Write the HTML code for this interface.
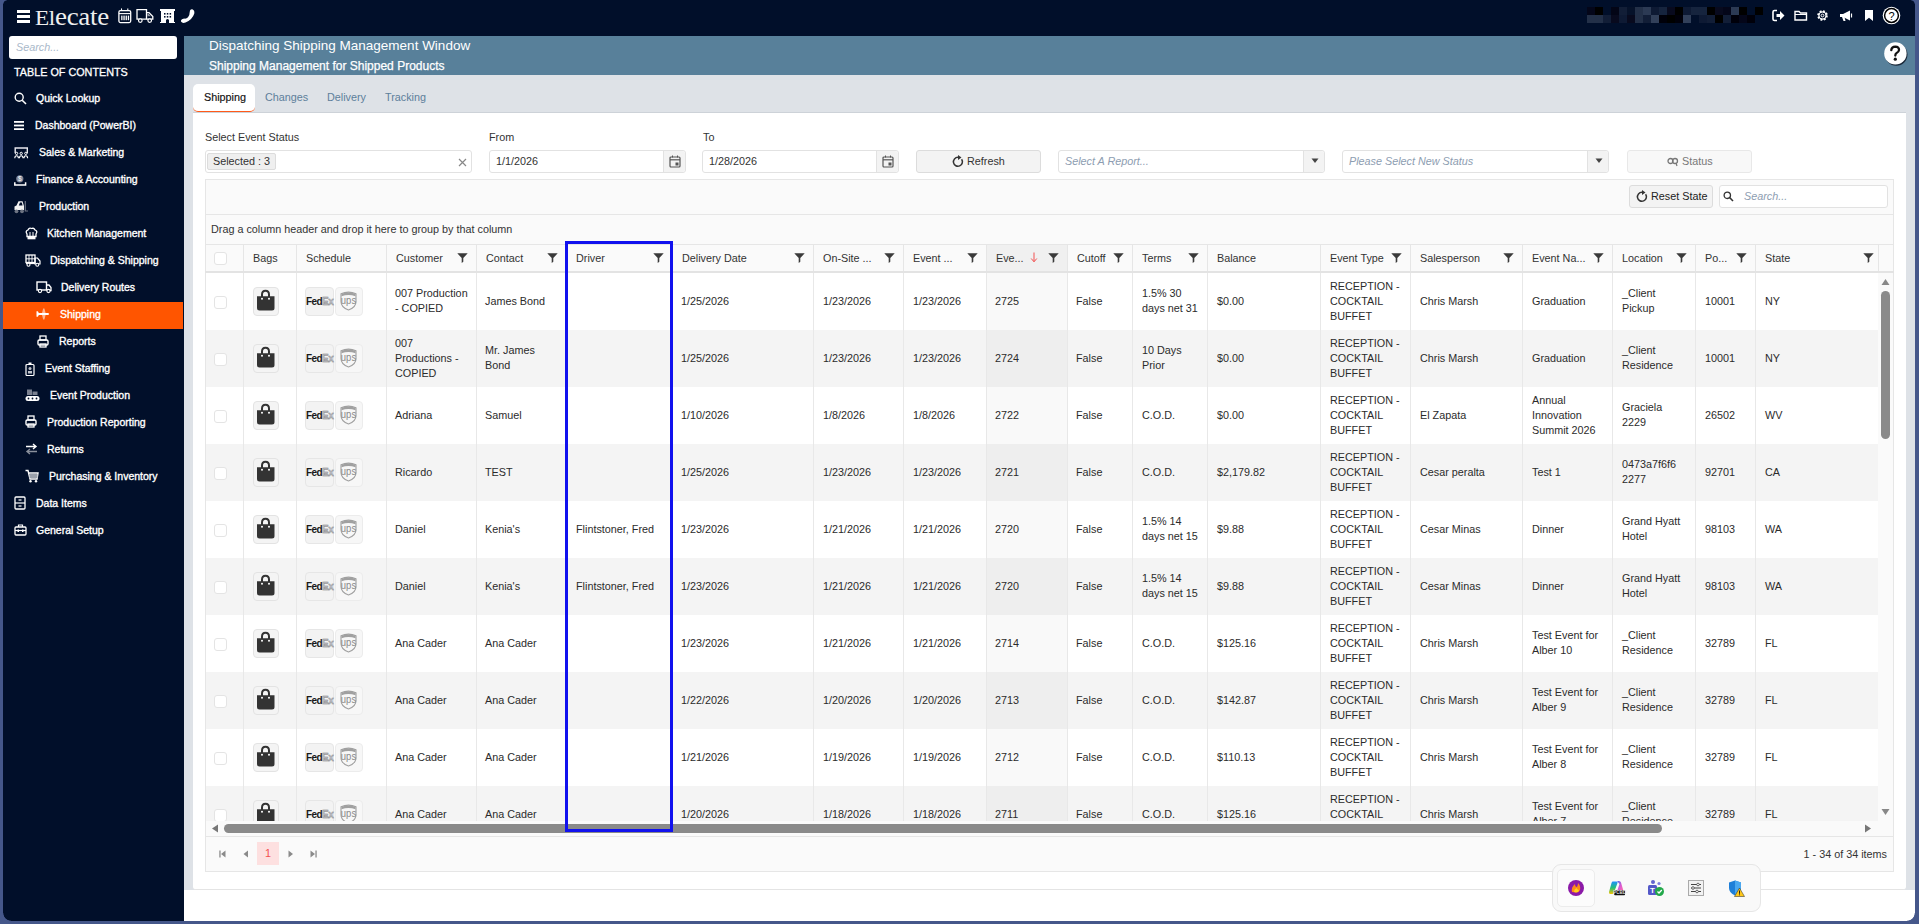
<!DOCTYPE html><html><head><meta charset="utf-8"><style>
*{box-sizing:border-box;margin:0;padding:0}
html,body{width:1919px;height:924px;overflow:hidden;background:#fff;font-family:"Liberation Sans",sans-serif;}
.a{position:absolute}
.t{position:absolute;white-space:nowrap;font-size:10.8px;line-height:12px}
.si{position:absolute;color:#fff;font-size:10.5px;white-space:nowrap;-webkit-text-stroke:0.35px #fff;line-height:12px}
.inp{position:absolute;height:23px;border:1px solid #e2e2e2;border-radius:3px;background:#fff;}
.btn{position:absolute;height:23px;border:1px solid #dcdcdc;border-radius:3px;background:#f3f3f3;}
.ph{color:#8d9db1;font-style:italic}
.cl{position:absolute;font-size:10.8px;color:#2b2b2b;line-height:15px;white-space:nowrap}
svg{position:absolute;overflow:visible}
</style></head><body><div class="a" style="left:0px;top:0px;width:1919px;height:36px;background:#010f2a"></div>
<div class="a" style="left:16.5px;top:10px;width:13.5px;height:3px;background:#fff"></div>
<div class="a" style="left:16.5px;top:15px;width:13.5px;height:3px;background:#fff"></div>
<div class="a" style="left:16.5px;top:19.5px;width:13.5px;height:3px;background:#fff"></div>
<div class="t" style="left:35px;top:3px;font-family:'Liberation Serif',serif;font-size:25px;line-height:28px;color:#eeeeee;letter-spacing:-0.3px;transform:scaleX(1.08);transform-origin:0 0"><span style="font-size:21.5px">El</span>ecate</div>
<svg style="left:118px;top:8px;" width="14" height="16" viewBox="0 0 14 16"><rect x="0.9" y="2.6" width="11.8" height="12" rx="1.5" fill="none" stroke="#fff" stroke-width="1.3"/><line x1="0.9" y1="5.6" x2="12.7" y2="5.6" stroke="#fff" stroke-width="1.1"/><line x1="3.5" y1="0.4" x2="3.5" y2="3" stroke="#fff" stroke-width="1.1"/><line x1="9.8" y1="0.4" x2="9.8" y2="3" stroke="#fff" stroke-width="1.1"/><rect x="3.2" y="7.6" width="1.3" height="4.6" fill="#fff"/><rect x="5.4" y="7.6" width="1.3" height="4.6" fill="#fff"/><rect x="7.6" y="7.6" width="1.3" height="4.6" fill="#fff"/><rect x="9.8" y="7.6" width="1.3" height="4.6" fill="#fff"/></svg>
<svg style="left:135px;top:8px;" width="20" height="16" viewBox="0 0 20 16"><path d="M2 1.6 H11.5 V11.2 H2 Z" fill="none" stroke="#fff" stroke-width="1.3"/><path d="M11.5 4.6 H14 L17.8 8.6 V11.2 H11.5" fill="none" stroke="#fff" stroke-width="1.3"/><path d="M12.5 5.8 H13.6 L15.8 8.2 H12.5 Z" fill="#fff" opacity="0.6"/><circle cx="5.3" cy="12.6" r="1.8" fill="#010f2a" stroke="#fff" stroke-width="1.2"/><circle cx="14.7" cy="12.6" r="1.8" fill="#010f2a" stroke="#fff" stroke-width="1.2"/></svg>
<svg style="left:159px;top:8px;" width="17" height="16" viewBox="0 0 17 16"><path d="M1 1 H16 V3 H15 V14 H16 V15 H10 V12 Q8.5 10 7 12 V15 H1 V14 H2 V3 H1 Z" fill="#fff"/><rect x="5" y="5" width="1.5" height="1.6" fill="#010f2a"/><rect x="7.8" y="5" width="1.5" height="1.6" fill="#010f2a"/><rect x="10.6" y="5" width="1.5" height="1.6" fill="#010f2a"/><rect x="5" y="8" width="1.5" height="1.6" fill="#010f2a"/><rect x="7.8" y="8" width="1.5" height="1.6" fill="#010f2a"/><rect x="10.6" y="8" width="1.5" height="1.6" fill="#010f2a"/></svg>
<svg style="left:180px;top:8px;" width="15" height="16" viewBox="0 0 15 16"><path d="M12.3 1.2 Q14.8 2.2 14.3 5.5 Q12.5 11.5 5.5 14.6 Q2.2 15.6 1 13.6 Q0.6 12 2 11.2 L4.2 10.6 Q6.5 11 8 9.2 Q9.8 7.3 9.6 4.8 L10 2.6 Q10.8 1 12.3 1.2 Z" fill="#fff"/></svg>
<div class="a" style="left:1587px;top:7px;width:8px;height:8px;background:rgb(4, 6, 25)"></div>
<div class="a" style="left:1587px;top:15px;width:8px;height:8px;background:rgb(35, 48, 72)"></div>
<div class="a" style="left:1595px;top:7px;width:8px;height:8px;background:rgb(0, 0, 0)"></div>
<div class="a" style="left:1595px;top:15px;width:8px;height:8px;background:rgb(35, 48, 72)"></div>
<div class="a" style="left:1603px;top:7px;width:8px;height:8px;background:rgb(1, 15, 42)"></div>
<div class="a" style="left:1603px;top:15px;width:8px;height:8px;background:rgb(18, 30, 55)"></div>
<div class="a" style="left:1611px;top:7px;width:8px;height:8px;background:rgb(3, 5, 22)"></div>
<div class="a" style="left:1611px;top:15px;width:8px;height:8px;background:rgb(8, 10, 30)"></div>
<div class="a" style="left:1619px;top:7px;width:8px;height:8px;background:rgb(18, 30, 55)"></div>
<div class="a" style="left:1619px;top:15px;width:8px;height:8px;background:rgb(14, 26, 52)"></div>
<div class="a" style="left:1627px;top:7px;width:8px;height:8px;background:rgb(6, 18, 42)"></div>
<div class="a" style="left:1627px;top:15px;width:8px;height:8px;background:rgb(8, 10, 30)"></div>
<div class="a" style="left:1635px;top:7px;width:8px;height:8px;background:rgb(35, 48, 72)"></div>
<div class="a" style="left:1635px;top:15px;width:8px;height:8px;background:rgb(35, 48, 72)"></div>
<div class="a" style="left:1643px;top:7px;width:8px;height:8px;background:rgb(44, 58, 84)"></div>
<div class="a" style="left:1643px;top:15px;width:8px;height:8px;background:rgb(18, 30, 55)"></div>
<div class="a" style="left:1651px;top:7px;width:8px;height:8px;background:rgb(14, 26, 52)"></div>
<div class="a" style="left:1651px;top:15px;width:8px;height:8px;background:rgb(50, 64, 90)"></div>
<div class="a" style="left:1659px;top:7px;width:8px;height:8px;background:rgb(22, 36, 62)"></div>
<div class="a" style="left:1659px;top:15px;width:8px;height:8px;background:rgb(0, 0, 10)"></div>
<div class="a" style="left:1667px;top:7px;width:8px;height:8px;background:rgb(8, 10, 30)"></div>
<div class="a" style="left:1667px;top:15px;width:8px;height:8px;background:rgb(0, 0, 0)"></div>
<div class="a" style="left:1675px;top:7px;width:8px;height:8px;background:rgb(0, 0, 0)"></div>
<div class="a" style="left:1675px;top:15px;width:8px;height:8px;background:rgb(0, 0, 10)"></div>
<div class="a" style="left:1683px;top:7px;width:8px;height:8px;background:rgb(14, 26, 52)"></div>
<div class="a" style="left:1683px;top:15px;width:8px;height:8px;background:rgb(50, 64, 90)"></div>
<div class="a" style="left:1691px;top:7px;width:8px;height:8px;background:rgb(22, 36, 62)"></div>
<div class="a" style="left:1691px;top:15px;width:8px;height:8px;background:rgb(1, 15, 42)"></div>
<div class="a" style="left:1699px;top:7px;width:8px;height:8px;background:rgb(22, 36, 62)"></div>
<div class="a" style="left:1699px;top:15px;width:8px;height:8px;background:rgb(14, 26, 52)"></div>
<div class="a" style="left:1707px;top:7px;width:8px;height:8px;background:rgb(0, 0, 0)"></div>
<div class="a" style="left:1707px;top:15px;width:8px;height:8px;background:rgb(18, 30, 55)"></div>
<div class="a" style="left:1715px;top:7px;width:8px;height:8px;background:rgb(8, 10, 30)"></div>
<div class="a" style="left:1715px;top:15px;width:8px;height:8px;background:rgb(0, 0, 0)"></div>
<div class="a" style="left:1723px;top:7px;width:8px;height:8px;background:rgb(4, 6, 25)"></div>
<div class="a" style="left:1723px;top:15px;width:8px;height:8px;background:rgb(18, 30, 55)"></div>
<div class="a" style="left:1731px;top:7px;width:8px;height:8px;background:rgb(44, 58, 84)"></div>
<div class="a" style="left:1731px;top:15px;width:8px;height:8px;background:rgb(0, 0, 10)"></div>
<div class="a" style="left:1739px;top:7px;width:8px;height:8px;background:rgb(0, 0, 0)"></div>
<div class="a" style="left:1739px;top:15px;width:8px;height:8px;background:rgb(4, 6, 25)"></div>
<div class="a" style="left:1747px;top:7px;width:8px;height:8px;background:rgb(1, 15, 42)"></div>
<div class="a" style="left:1747px;top:15px;width:8px;height:8px;background:rgb(0, 0, 10)"></div>
<div class="a" style="left:1755px;top:7px;width:8px;height:8px;background:rgb(0, 0, 0)"></div>
<div class="a" style="left:1755px;top:15px;width:8px;height:8px;background:rgb(1, 15, 42)"></div>
<svg style="left:1772px;top:9px;" width="13" height="13" viewBox="0 0 13 13"><path d="M5 1.5 H2.5 Q1 1.5 1 3 V10 Q1 11.5 2.5 11.5 H5" fill="none" stroke="#fff" stroke-width="1.6"/><path d="M4.5 5 H8 V2 L12.5 6.5 L8 11 V8 H4.5 Z" fill="#fff"/></svg>
<svg style="left:1794px;top:9px;" width="14" height="13" viewBox="0 0 14 13"><path d="M1 2.5 H5 L6.5 4 H12.5 V11 H1 Z" fill="none" stroke="#fff" stroke-width="1.4"/><line x1="1" y1="5.5" x2="12.5" y2="5.5" stroke="#fff" stroke-width="1"/></svg>
<svg style="left:1816px;top:9px;" width="13" height="13" viewBox="0 0 13 13"><circle cx="6.5" cy="6.5" r="4.2" fill="none" stroke="#fff" stroke-width="2.2" stroke-dasharray="1.8 1.5"/><circle cx="6.5" cy="6.5" r="3.6" fill="none" stroke="#fff" stroke-width="1.2"/><circle cx="6.5" cy="6.5" r="1.4" fill="none" stroke="#fff" stroke-width="1"/></svg>
<svg style="left:1839px;top:9px;" width="14" height="13" viewBox="0 0 14 13"><path d="M1 5 H4 L11 1.5 V11.5 L4 8 H1 Z" fill="#fff"/><path d="M3 8 L4.5 12 H6.5 L5.5 8" fill="#fff"/><line x1="12.5" y1="4.5" x2="12.5" y2="8.5" stroke="#fff" stroke-width="1.2"/></svg>
<svg style="left:1864px;top:9px;" width="10" height="13" viewBox="0 0 10 13"><path d="M1 1 H9 V12 L5 8.8 L1 12 Z" fill="#fff"/></svg>
<svg style="left:1882px;top:6px;" width="19" height="19" viewBox="0 0 19 19"><circle cx="9.5" cy="9.5" r="8.8" fill="#fff"/><circle cx="9.5" cy="9.5" r="6.9" fill="#fff" stroke="#000" stroke-width="1.5"/><text x="9.5" y="13.6" text-anchor="middle" font-family="Liberation Sans" font-size="11" fill="#000">?</text></svg>
<div class="a" style="left:0px;top:36px;width:184px;height:888px;background:#010f2a"></div>
<div class="a" style="left:9px;top:36px;width:168px;height:23px;background:#fff;border-radius:3px"></div>
<div class="t" style="left:16px;top:41px;color:#a9b8c9;font-style:italic;font-size:10.8px">Search...</div>
<div class="t" style="left:14px;top:66px;color:#fff;font-size:10.8px;-webkit-text-stroke:0.3px #fff">TABLE OF CONTENTS</div>
<div class="a" style="left:3px;top:302px;width:180px;height:27px;background:#ff5500"></div>
<div class="si" style="left:36px;top:92px">Quick Lookup</div>
<div class="si" style="left:35px;top:119px">Dashboard (PowerBI)</div>
<div class="si" style="left:39px;top:146px">Sales &amp; Marketing</div>
<div class="si" style="left:36px;top:173px">Finance &amp; Accounting</div>
<div class="si" style="left:39px;top:200px">Production</div>
<div class="si" style="left:47px;top:227px">Kitchen Management</div>
<div class="si" style="left:50px;top:254px">Dispatching &amp; Shipping</div>
<div class="si" style="left:61px;top:281px">Delivery Routes</div>
<div class="si" style="left:60px;top:308px">Shipping</div>
<div class="si" style="left:59px;top:335px">Reports</div>
<div class="si" style="left:45px;top:362px">Event Staffing</div>
<div class="si" style="left:50px;top:389px">Event Production</div>
<div class="si" style="left:47px;top:416px">Production Reporting</div>
<div class="si" style="left:47px;top:443px">Returns</div>
<div class="si" style="left:49px;top:470px">Purchasing &amp; Inventory</div>
<div class="si" style="left:36px;top:497px">Data Items</div>
<div class="si" style="left:36px;top:524px">General Setup</div>
<svg style="left:14px;top:92px;" width="13" height="13" viewBox="0 0 13 13"><circle cx="5.2" cy="5.2" r="4" fill="none" stroke="#fff" stroke-width="1.4"/><line x1="8.2" y1="8.2" x2="12" y2="12" stroke="#fff" stroke-width="1.6"/></svg>
<svg style="left:14px;top:120px;" width="11" height="11" viewBox="0 0 11 11"><rect x="0" y="1" width="10" height="1.8" fill="#fff"/><rect x="0" y="4.6" width="10" height="1.8" fill="#fff"/><rect x="0" y="8.2" width="10" height="1.8" fill="#fff"/></svg>
<svg style="left:14px;top:147px;" width="15" height="12" viewBox="0 0 15 12"><path d="M1.2 6.3 V1 H13.3 V6.3" fill="none" stroke="#e8e8ee" stroke-width="1.4"/><circle cx="2.6" cy="6.4" r="1.15" fill="none" stroke="#fff" stroke-width="1"/><circle cx="7.2" cy="6.4" r="1.15" fill="none" stroke="#fff" stroke-width="1"/><circle cx="11.8" cy="6.4" r="1.15" fill="none" stroke="#fff" stroke-width="1"/><path d="M0.8 11.3 Q0.8 8.8 2.6 8.8 Q4.4 8.8 4.4 11.3 M5.4 11.3 Q5.4 8.8 7.2 8.8 Q9 8.8 9 11.3 M10 11.3 Q10 8.8 11.8 8.8 Q13.6 8.8 13.6 11.3" fill="none" stroke="#fff" stroke-width="1.1"/></svg>
<svg style="left:14px;top:173px;" width="13" height="13" viewBox="0 0 13 13"><circle cx="5.8" cy="5.8" r="3.6" fill="#80889a"/><text x="5.8" y="8.3" text-anchor="middle" font-size="6.5" font-family="Liberation Sans" fill="#fff">$</text><path d="M0.8 9.2 V12 H11.6 V9.2" fill="none" stroke="#fff" stroke-width="1.5"/></svg>
<svg style="left:14px;top:200px;" width="15" height="14" viewBox="0 0 15 14"><path d="M0.5 10 V6.5 L2.5 5.5 L4.5 1.2 H8.5 L10 6 V10 Z" fill="#f2f2f2"/><path d="M4.8 5.6 L6 2.6 H7.8 L8.6 5.6 Z" fill="#010f2a"/><circle cx="2.5" cy="11.3" r="1.9" fill="#6c7382"/><circle cx="8" cy="11.3" r="1.9" fill="#6c7382"/><path d="M11.3 1 V11 H14" fill="none" stroke="#6c7382" stroke-width="1.2"/></svg>
<svg style="left:25px;top:227px;" width="13" height="13" viewBox="0 0 13 13"><path d="M2 7 Q0 4 3 3 Q4 0.5 6.5 1.5 Q9 0.5 10 3 Q13 4 11 7 V9.5 H2 Z" fill="none" stroke="#fff" stroke-width="1.3"/><rect x="2.5" y="10" width="8" height="2.3" fill="#fff"/><line x1="5" y1="5" x2="5" y2="9" stroke="#fff"/><line x1="8" y1="5" x2="8" y2="9" stroke="#fff"/></svg>
<svg style="left:25px;top:254px;" width="16" height="13" viewBox="0 0 16 13"><rect x="1" y="1" width="9" height="7.5" fill="none" stroke="#fff" stroke-width="1.3"/><line x1="1" y1="4.8" x2="10" y2="4.8" stroke="#fff" stroke-width="0.9"/><line x1="4" y1="1" x2="4" y2="8.5" stroke="#fff" stroke-width="0.9"/><line x1="7" y1="1" x2="7" y2="8.5" stroke="#fff" stroke-width="0.9"/><path d="M10 4 H12.5 L15 7 V10 H10 Z" fill="none" stroke="#fff" stroke-width="1.2"/><line x1="1" y1="9.5" x2="10" y2="9.5" stroke="#fff" stroke-width="1.2"/><circle cx="3.5" cy="10.8" r="1.5" fill="#010f2a" stroke="#fff" stroke-width="1.1"/><circle cx="12.3" cy="10.8" r="1.5" fill="#010f2a" stroke="#fff" stroke-width="1.1"/></svg>
<svg style="left:36px;top:281px;" width="16" height="12" viewBox="0 0 16 12"><rect x="1" y="1" width="9.5" height="8" fill="none" stroke="#fff" stroke-width="1.4"/><path d="M10.5 4 H13 L15 6.5 V9.5 H10.5" fill="none" stroke="#fff" stroke-width="1.3"/><circle cx="4" cy="10" r="1.6" fill="#010f2a" stroke="#fff" stroke-width="1.1"/><circle cx="12.5" cy="10" r="1.6" fill="#010f2a" stroke="#fff" stroke-width="1.1"/></svg>
<svg style="left:36px;top:307px;" width="14" height="14" viewBox="0 0 14 14"><path d="M6 6 L7.2 1.5 H8.4 L9.6 6 Z M6 8 L7.2 12.5 H8.4 L9.6 8 Z" fill="#ffb591"/><path d="M1.5 6 H12.3 Q14 7 12.3 8 H1.5 Z" fill="#fff"/><path d="M0.5 4.3 H1.8 L2.8 6 V8 L1.8 9.7 H0.5 Z" fill="#fff"/></svg>
<svg style="left:37px;top:335px;" width="12" height="13" viewBox="0 0 12 13"><rect x="3" y="1" width="6" height="4" fill="none" stroke="#fff" stroke-width="1.3"/><rect x="1" y="5" width="10" height="5" rx="1.2" fill="none" stroke="#fff" stroke-width="1.4"/><rect x="3" y="9" width="6" height="3" fill="none" stroke="#fff" stroke-width="1.3"/></svg>
<svg style="left:25px;top:362px;" width="10" height="14" viewBox="0 0 10 14"><rect x="1" y="2.5" width="8" height="11" rx="1" fill="none" stroke="#fff" stroke-width="1.2"/><rect x="3.5" y="0.5" width="3" height="2.5" fill="#fff"/><circle cx="5" cy="6.5" r="1.5" fill="#c0c4cc"/><rect x="3" y="9" width="4" height="2.5" fill="#c0c4cc"/></svg>
<svg style="left:25px;top:389px;" width="15" height="13" viewBox="0 0 15 13"><rect x="2" y="0.5" width="5" height="5.5" fill="#7b8190"/><rect x="7.5" y="2.5" width="5" height="3.5" fill="#7b8190"/><rect x="0.5" y="7" width="14" height="5" rx="2.5" fill="#fff"/><circle cx="3.5" cy="9.5" r="0.9" fill="#010f2a"/><circle cx="7.5" cy="9.5" r="0.9" fill="#010f2a"/><circle cx="11.5" cy="9.5" r="0.9" fill="#010f2a"/></svg>
<svg style="left:25px;top:415px;" width="12" height="13" viewBox="0 0 12 13"><rect x="3" y="1" width="6" height="4" fill="none" stroke="#fff" stroke-width="1.3"/><rect x="1" y="5" width="10" height="5" rx="1.2" fill="none" stroke="#fff" stroke-width="1.4"/><rect x="3" y="9" width="6" height="3" fill="none" stroke="#fff" stroke-width="1.3"/></svg>
<svg style="left:25px;top:443px;" width="13" height="12" viewBox="0 0 13 12"><path d="M1 3.5 H10.5 M8 1 L11 3.5 L8 6" fill="none" stroke="#fff" stroke-width="1.4"/><path d="M12 8.5 H2.5 M5 6 L2 8.5 L5 11" fill="none" stroke="#8a909c" stroke-width="1.4"/></svg>
<svg style="left:25px;top:469px;" width="14" height="14" viewBox="0 0 14 14"><path d="M0.5 1.5 H3 L5 10 H12 L13 4 H4" fill="none" stroke="#fff" stroke-width="1.4"/><circle cx="5.5" cy="12.3" r="1.2" fill="#fff"/><circle cx="11" cy="12.3" r="1.2" fill="#fff"/><rect x="4.5" y="5" width="8" height="4" fill="#9aa0ab"/></svg>
<svg style="left:14px;top:496px;" width="12" height="14" viewBox="0 0 12 14"><rect x="1" y="1" width="10" height="12" rx="1" fill="none" stroke="#fff" stroke-width="1.3"/><line x1="1" y1="7" x2="11" y2="7" stroke="#fff" stroke-width="1.2"/><line x1="4.5" y1="4" x2="7.5" y2="4" stroke="#fff" stroke-width="1.2"/><line x1="4.5" y1="10" x2="7.5" y2="10" stroke="#fff" stroke-width="1.2"/></svg>
<svg style="left:14px;top:523px;" width="13" height="13" viewBox="0 0 13 13"><path d="M4.5 4 V2 H8.5 V4" fill="none" stroke="#fff" stroke-width="1.2"/><rect x="1" y="4" width="11" height="8" rx="1" fill="none" stroke="#fff" stroke-width="1.3"/><line x1="1" y1="7.5" x2="12" y2="7.5" stroke="#fff" stroke-width="1.2"/><rect x="3.5" y="6.5" width="1.5" height="2.5" fill="#fff"/><rect x="8" y="6.5" width="1.5" height="2.5" fill="#fff"/></svg>
<div class="a" style="left:184px;top:36px;width:1735px;height:39px;background:#58809a"></div>
<div class="t" style="left:209px;top:38px;font-size:13.5px;line-height:16px;color:#fff">Dispatching Shipping Management Window</div>
<div class="t" style="left:209px;top:59px;font-size:12px;line-height:14px;color:#fff;-webkit-text-stroke:0.25px #fff">Shipping Management for Shipped Products</div>
<svg style="left:1884px;top:42px;" width="24" height="24" viewBox="0 0 24 24"><circle cx="12.3" cy="12.6" r="11.2" fill="#111a28" opacity="0.85"/><circle cx="11.4" cy="11.4" r="11.2" fill="#fff"/><path d="M7.3 8.2 Q7.6 4.6 11.3 4.6 Q15.2 4.8 15 8 Q14.8 10 12.6 11 Q11.3 11.7 11.3 13.5" fill="none" stroke="#111" stroke-width="2.3" stroke-linecap="round"/><circle cx="11.3" cy="17.2" r="1.6" fill="#111"/></svg>
<div class="a" style="left:184px;top:75px;width:1735px;height:815px;background:#dee2e7"></div>
<div class="a" style="left:193px;top:84px;width:62px;height:28px;background:#fff;border-radius:5px;border-bottom:1.6px solid #ff5a1a"></div>
<div class="t" style="left:204px;top:91px;color:#111;-webkit-text-stroke:0.15px #111">Shipping</div>
<div class="t" style="left:265px;top:91px;color:#5d7f9b">Changes</div>
<div class="t" style="left:327px;top:91px;color:#5d7f9b">Delivery</div>
<div class="t" style="left:385px;top:91px;color:#5d7f9b">Tracking</div>
<div class="a" style="left:193px;top:112px;width:1713px;height:778px;background:#fff;border-top:1px solid #cdd2d8;border-bottom:1px solid #e4e4e4;border-radius:0 0 3px 3px"></div>
<div class="t" style="left:205px;top:131px;color:#333">Select Event Status</div>
<div class="t" style="left:489px;top:131px;color:#333">From</div>
<div class="t" style="left:703px;top:131px;color:#333">To</div>
<div class="inp" style="left:205px;top:150px;width:267px"></div>
<div class="a" style="left:207px;top:153px;width:69px;height:17px;background:#efefef;border:1px solid #dcdcdc;border-radius:2px"></div>
<div class="t" style="left:213px;top:155px;color:#333">Selected : 3</div>
<svg style="left:458px;top:158px;" width="9" height="9" viewBox="0 0 9 9"><path d="M1 1 L8 8 M8 1 L1 8" stroke="#888" stroke-width="1.2"/></svg>
<div class="inp" style="left:489px;top:150px;width:197px"></div>
<div class="a" style="left:663px;top:151px;width:22px;height:21px;background:#f3f3f3;border-left:1px solid #e2e2e2;border-radius:0 3px 3px 0"></div>
<div class="t" style="left:496px;top:155px;color:#333">1/1/2026</div>
<svg style="left:669px;top:155px;" width="12" height="13" viewBox="0 0 12 13"><rect x="1" y="2" width="10" height="10" rx="1" fill="none" stroke="#555" stroke-width="1.2"/><line x1="1" y1="4.8" x2="11" y2="4.8" stroke="#555" stroke-width="1.2"/><line x1="3.5" y1="0.5" x2="3.5" y2="2.5" stroke="#555"/><line x1="8.5" y1="0.5" x2="8.5" y2="2.5" stroke="#555"/><rect x="6.5" y="7.5" width="3" height="3" fill="#555"/></svg>
<div class="inp" style="left:702px;top:150px;width:197px"></div>
<div class="a" style="left:876px;top:151px;width:22px;height:21px;background:#f3f3f3;border-left:1px solid #e2e2e2;border-radius:0 3px 3px 0"></div>
<div class="t" style="left:709px;top:155px;color:#333">1/28/2026</div>
<svg style="left:882px;top:155px;" width="12" height="13" viewBox="0 0 12 13"><rect x="1" y="2" width="10" height="10" rx="1" fill="none" stroke="#555" stroke-width="1.2"/><line x1="1" y1="4.8" x2="11" y2="4.8" stroke="#555" stroke-width="1.2"/><line x1="3.5" y1="0.5" x2="3.5" y2="2.5" stroke="#555"/><line x1="8.5" y1="0.5" x2="8.5" y2="2.5" stroke="#555"/><rect x="6.5" y="7.5" width="3" height="3" fill="#555"/></svg>
<div class="btn" style="left:916px;top:150px;width:125px"></div>
<svg style="left:952px;top:155px;" width="12" height="13" viewBox="0 0 12 13"><path d="M9.6 4.2 A4.5 4.5 0 1 1 6 2.3" fill="none" stroke="#333" stroke-width="1.5"/><path d="M6 0 L9.5 2.5 L6 5 Z" fill="#333"/></svg>
<div class="t" style="left:967px;top:155px;color:#333">Refresh</div>
<div class="inp" style="left:1058px;top:150px;width:267px"></div>
<div class="a" style="left:1303px;top:151px;width:21px;height:21px;background:#f3f3f3;border-left:1px solid #e2e2e2;border-radius:0 3px 3px 0"></div>
<svg style="left:1311px;top:158px;" width="8" height="6" viewBox="0 0 8 6"><path d="M0.5 0.5 H7.5 L4 5 Z" fill="#444"/></svg>
<div class="t" style="left:1065px;top:155px;color:#8d9db1;font-style:italic">Select A Report...</div>
<div class="inp" style="left:1342px;top:150px;width:267px"></div>
<div class="a" style="left:1587px;top:151px;width:21px;height:21px;background:#f3f3f3;border-left:1px solid #e2e2e2;border-radius:0 3px 3px 0"></div>
<svg style="left:1595px;top:158px;" width="8" height="6" viewBox="0 0 8 6"><path d="M0.5 0.5 H7.5 L4 5 Z" fill="#444"/></svg>
<div class="t" style="left:1349px;top:155px;color:#8d9db1;font-style:italic">Please Select New Status</div>
<div class="btn" style="left:1627px;top:150px;width:125px;background:#f8f8f8;border-color:#e8e8e8"></div>
<svg style="left:1667px;top:157px;" width="13" height="10" viewBox="0 0 13 10"><circle cx="3.5" cy="4" r="2.5" fill="none" stroke="#777" stroke-width="1.3"/><circle cx="8" cy="4" r="2.5" fill="none" stroke="#777" stroke-width="1.3"/><path d="M9 6 L10 9" stroke="#777" stroke-width="1.2"/></svg>
<div class="t" style="left:1682px;top:155px;color:#777">Status</div>
<div class="a" style="left:205px;top:179px;width:1689px;height:693px;background:#fafafa;border:1px solid #e6e6e6"></div>
<div class="a" style="left:205px;top:214px;width:1689px;height:1px;background:#e6e6e6"></div>
<div class="btn" style="left:1629px;top:185px;width:84px;height:23px;background:#f3f3f3"></div>
<svg style="left:1636px;top:190px;" width="12" height="13" viewBox="0 0 12 13"><path d="M9.6 4.2 A4.5 4.5 0 1 1 6 2.3" fill="none" stroke="#333" stroke-width="1.5"/><path d="M6 0 L9.5 2.5 L6 5 Z" fill="#333"/></svg>
<div class="t" style="left:1651px;top:190px;color:#222">Reset State</div>
<div class="inp" style="left:1719px;top:185px;width:169px;height:23px"></div>
<svg style="left:1723px;top:191px;" width="11" height="11" viewBox="0 0 11 11"><circle cx="4.3" cy="4.3" r="3.2" fill="none" stroke="#333" stroke-width="1.3"/><line x1="6.8" y1="6.8" x2="10" y2="10" stroke="#333" stroke-width="1.6"/></svg>
<div class="t" style="left:1744px;top:190px;color:#8d9db1;font-style:italic">Search...</div>
<div class="t" style="left:211px;top:223px;color:#333">Drag a column header and drop it here to group by that column</div>
<div class="a" style="left:205px;top:244px;width:1689px;height:1px;background:#e6e6e6"></div>
<div class="a" style="left:205px;top:271px;width:1689px;height:2px;background:#e3e3e3"></div>
<div class="a" style="left:987px;top:245px;width:80px;height:26px;background:#f0f0f0"></div>
<div class="a" style="left:243px;top:245px;width:1px;height:26px;background:#e6e6e6"></div>
<div class="a" style="left:296px;top:245px;width:1px;height:26px;background:#e6e6e6"></div>
<div class="t" style="left:253px;top:252px;color:#333">Bags</div>
<div class="a" style="left:386px;top:245px;width:1px;height:26px;background:#e6e6e6"></div>
<div class="t" style="left:306px;top:252px;color:#333">Schedule</div>
<div class="a" style="left:476px;top:245px;width:1px;height:26px;background:#e6e6e6"></div>
<div class="t" style="left:396px;top:252px;color:#333">Customer</div>
<svg style="left:457px;top:253px;" width="11" height="10" viewBox="0 0 11 10"><path d="M0.3 0.3 H10.7 L6.3 5 V8.8 L4.7 10 V5 Z" fill="#3a3a3a"/></svg>
<div class="a" style="left:566px;top:245px;width:1px;height:26px;background:#e6e6e6"></div>
<div class="t" style="left:486px;top:252px;color:#333">Contact</div>
<svg style="left:547px;top:253px;" width="11" height="10" viewBox="0 0 11 10"><path d="M0.3 0.3 H10.7 L6.3 5 V8.8 L4.7 10 V5 Z" fill="#3a3a3a"/></svg>
<div class="a" style="left:672px;top:245px;width:1px;height:26px;background:#e6e6e6"></div>
<div class="t" style="left:576px;top:252px;color:#333">Driver</div>
<svg style="left:653px;top:253px;" width="11" height="10" viewBox="0 0 11 10"><path d="M0.3 0.3 H10.7 L6.3 5 V8.8 L4.7 10 V5 Z" fill="#3a3a3a"/></svg>
<div class="a" style="left:813px;top:245px;width:1px;height:26px;background:#e6e6e6"></div>
<div class="t" style="left:682px;top:252px;color:#333">Delivery Date</div>
<svg style="left:794px;top:253px;" width="11" height="10" viewBox="0 0 11 10"><path d="M0.3 0.3 H10.7 L6.3 5 V8.8 L4.7 10 V5 Z" fill="#3a3a3a"/></svg>
<div class="a" style="left:903px;top:245px;width:1px;height:26px;background:#e6e6e6"></div>
<div class="t" style="left:823px;top:252px;color:#333">On-Site ...</div>
<svg style="left:884px;top:253px;" width="11" height="10" viewBox="0 0 11 10"><path d="M0.3 0.3 H10.7 L6.3 5 V8.8 L4.7 10 V5 Z" fill="#3a3a3a"/></svg>
<div class="a" style="left:986px;top:245px;width:1px;height:26px;background:#e6e6e6"></div>
<div class="t" style="left:913px;top:252px;color:#333">Event ...</div>
<svg style="left:967px;top:253px;" width="11" height="10" viewBox="0 0 11 10"><path d="M0.3 0.3 H10.7 L6.3 5 V8.8 L4.7 10 V5 Z" fill="#3a3a3a"/></svg>
<div class="a" style="left:1067px;top:245px;width:1px;height:26px;background:#e6e6e6"></div>
<div class="t" style="left:996px;top:252px;color:#333">Eve...</div>
<svg style="left:1048px;top:253px;" width="11" height="10" viewBox="0 0 11 10"><path d="M0.3 0.3 H10.7 L6.3 5 V8.8 L4.7 10 V5 Z" fill="#3a3a3a"/></svg>
<div class="a" style="left:1132px;top:245px;width:1px;height:26px;background:#e6e6e6"></div>
<div class="t" style="left:1077px;top:252px;color:#333">Cutoff</div>
<svg style="left:1113px;top:253px;" width="11" height="10" viewBox="0 0 11 10"><path d="M0.3 0.3 H10.7 L6.3 5 V8.8 L4.7 10 V5 Z" fill="#3a3a3a"/></svg>
<div class="a" style="left:1207px;top:245px;width:1px;height:26px;background:#e6e6e6"></div>
<div class="t" style="left:1142px;top:252px;color:#333">Terms</div>
<svg style="left:1188px;top:253px;" width="11" height="10" viewBox="0 0 11 10"><path d="M0.3 0.3 H10.7 L6.3 5 V8.8 L4.7 10 V5 Z" fill="#3a3a3a"/></svg>
<div class="a" style="left:1320px;top:245px;width:1px;height:26px;background:#e6e6e6"></div>
<div class="t" style="left:1217px;top:252px;color:#333">Balance</div>
<div class="a" style="left:1410px;top:245px;width:1px;height:26px;background:#e6e6e6"></div>
<div class="t" style="left:1330px;top:252px;color:#333">Event Type</div>
<svg style="left:1391px;top:253px;" width="11" height="10" viewBox="0 0 11 10"><path d="M0.3 0.3 H10.7 L6.3 5 V8.8 L4.7 10 V5 Z" fill="#3a3a3a"/></svg>
<div class="a" style="left:1522px;top:245px;width:1px;height:26px;background:#e6e6e6"></div>
<div class="t" style="left:1420px;top:252px;color:#333">Salesperson</div>
<svg style="left:1503px;top:253px;" width="11" height="10" viewBox="0 0 11 10"><path d="M0.3 0.3 H10.7 L6.3 5 V8.8 L4.7 10 V5 Z" fill="#3a3a3a"/></svg>
<div class="a" style="left:1612px;top:245px;width:1px;height:26px;background:#e6e6e6"></div>
<div class="t" style="left:1532px;top:252px;color:#333">Event Na...</div>
<svg style="left:1593px;top:253px;" width="11" height="10" viewBox="0 0 11 10"><path d="M0.3 0.3 H10.7 L6.3 5 V8.8 L4.7 10 V5 Z" fill="#3a3a3a"/></svg>
<div class="a" style="left:1695px;top:245px;width:1px;height:26px;background:#e6e6e6"></div>
<div class="t" style="left:1622px;top:252px;color:#333">Location</div>
<svg style="left:1676px;top:253px;" width="11" height="10" viewBox="0 0 11 10"><path d="M0.3 0.3 H10.7 L6.3 5 V8.8 L4.7 10 V5 Z" fill="#3a3a3a"/></svg>
<div class="a" style="left:1755px;top:245px;width:1px;height:26px;background:#e6e6e6"></div>
<div class="t" style="left:1705px;top:252px;color:#333">Po...</div>
<svg style="left:1736px;top:253px;" width="11" height="10" viewBox="0 0 11 10"><path d="M0.3 0.3 H10.7 L6.3 5 V8.8 L4.7 10 V5 Z" fill="#3a3a3a"/></svg>
<div class="a" style="left:1878px;top:245px;width:1px;height:26px;background:#e6e6e6"></div>
<div class="t" style="left:1765px;top:252px;color:#333">State</div>
<svg style="left:1862.5px;top:253px;" width="11" height="10" viewBox="0 0 11 10"><path d="M0.3 0.3 H10.7 L6.3 5 V8.8 L4.7 10 V5 Z" fill="#3a3a3a"/></svg>
<svg style="left:1030px;top:252px;" width="8" height="11" viewBox="0 0 8 11"><path d="M4 0.5 V9.5" stroke="#f25050" stroke-width="1"/><path d="M1.2 6.5 L4 9.8 L6.8 6.5" fill="none" stroke="#f25050" stroke-width="1"/></svg>
<div class="a" style="left:214px;top:252px;width:13px;height:13px;background:#fff;border:1px solid #e4e4e4;border-radius:3px"></div>
<div class="a" style="left:206px;top:273px;width:1672px;height:548px;overflow:hidden;background:#fff">
<div class="a" style="left:0px;top:0px;width:1672px;height:57px;background:#fff"></div>
<div class="a" style="left:781px;top:0px;width:80px;height:57px;background:rgba(0,0,0,0.025)"></div>
<div class="a" style="left:8px;top:22.5px;width:13px;height:13px;background:#fff;border:1px solid #e4e4e4;border-radius:3px"></div>
<div class="a" style="left:47px;top:14px;width:26px;height:29px;background:#f4f4f4;border:1px solid #e3e3e3;border-radius:4px"></div>
<svg style="left:50px;top:16px;" width="20" height="22" viewBox="0 0 20 22"><path d="M6 8 V5.5 Q6 1.8 9.5 1.8 Q13 1.8 13 5.5 V8" fill="none" stroke="#333" stroke-width="2"/><path d="M1 7.2 H18.5 V19 Q18.5 21.5 16 21.5 H3.5 Q1 21.5 1 19 Z" fill="#333"/><circle cx="6" cy="9.8" r="1" fill="#fff"/><circle cx="13" cy="9.8" r="1" fill="#fff"/></svg>
<div class="a" style="left:99px;top:14px;width:29px;height:29px;background:#f3f3f3;border:1px solid #e6e6e6;border-radius:4px"></div>
<div class="t" style="left:100px;top:23px;font-size:10px;font-weight:bold;letter-spacing:-0.6px;color:#1a1a1a">Fed<span style="color:#c4c4cc;letter-spacing:-0.4px;-webkit-text-stroke:0.35px #777">Ex</span></div>
<div class="a" style="left:129px;top:14px;width:28px;height:29px;background:#f7f7f7;border:1px solid #ececec;border-radius:4px"></div>
<svg style="left:134px;top:18px;" width="17" height="20" viewBox="0 0 17 20"><path d="M1 2.8 Q8.5 -0.6 16 2.8 V10.5 Q16 16.5 8.5 19 Q1 16.5 1 10.5 Z" fill="none" stroke="#a0a0a0" stroke-width="1.1"/><path d="M1.5 3 Q8.5 0.2 15.5 3 V5.2 Q8.5 3 1.5 5.2 Z" fill="#a0a0a0"/><text x="8.5" y="13.2" text-anchor="middle" font-family="Liberation Sans" font-size="9.5" fill="#8a8a8a" transform="scale(1,1.15) translate(0,-1.7)">ups</text></svg>
<div class="cl" style="left:189px;top:13.0px">007 Production<br>- COPIED</div>
<div class="cl" style="left:279px;top:21.0px">James Bond</div>
<div class="cl" style="left:475px;top:21.0px">1/25/2026</div>
<div class="cl" style="left:617px;top:21.0px">1/23/2026</div>
<div class="cl" style="left:707px;top:21.0px">1/23/2026</div>
<div class="cl" style="left:789px;top:21.0px">2725</div>
<div class="cl" style="left:870px;top:21.0px">False</div>
<div class="cl" style="left:936px;top:13.0px">1.5% 30<br>days net 31</div>
<div class="cl" style="left:1011px;top:21.0px">$0.00</div>
<div class="cl" style="left:1124px;top:6.0px">RECEPTION -<br>COCKTAIL<br>BUFFET</div>
<div class="cl" style="left:1214px;top:21.0px">Chris Marsh</div>
<div class="cl" style="left:1326px;top:21.0px">Graduation</div>
<div class="cl" style="left:1416px;top:13.0px">_Client<br>Pickup</div>
<div class="cl" style="left:1499px;top:21.0px">10001</div>
<div class="cl" style="left:1559px;top:21.0px">NY</div>
<div class="a" style="left:37px;top:0px;width:1px;height:57px;background:#e8e8e8"></div>
<div class="a" style="left:90px;top:0px;width:1px;height:57px;background:#e8e8e8"></div>
<div class="a" style="left:180px;top:0px;width:1px;height:57px;background:#e8e8e8"></div>
<div class="a" style="left:270px;top:0px;width:1px;height:57px;background:#e8e8e8"></div>
<div class="a" style="left:607px;top:0px;width:1px;height:57px;background:#e8e8e8"></div>
<div class="a" style="left:697px;top:0px;width:1px;height:57px;background:#e8e8e8"></div>
<div class="a" style="left:780px;top:0px;width:1px;height:57px;background:#e8e8e8"></div>
<div class="a" style="left:861px;top:0px;width:1px;height:57px;background:#e8e8e8"></div>
<div class="a" style="left:926px;top:0px;width:1px;height:57px;background:#e8e8e8"></div>
<div class="a" style="left:1001px;top:0px;width:1px;height:57px;background:#e8e8e8"></div>
<div class="a" style="left:1114px;top:0px;width:1px;height:57px;background:#e8e8e8"></div>
<div class="a" style="left:1204px;top:0px;width:1px;height:57px;background:#e8e8e8"></div>
<div class="a" style="left:1316px;top:0px;width:1px;height:57px;background:#e8e8e8"></div>
<div class="a" style="left:1406px;top:0px;width:1px;height:57px;background:#e8e8e8"></div>
<div class="a" style="left:1489px;top:0px;width:1px;height:57px;background:#e8e8e8"></div>
<div class="a" style="left:1549px;top:0px;width:1px;height:57px;background:#e8e8e8"></div>
<div class="a" style="left:1672px;top:0px;width:1px;height:57px;background:#e8e8e8"></div>
<div class="a" style="left:0px;top:57px;width:1672px;height:57px;background:#f4f4f4"></div>
<div class="a" style="left:781px;top:57px;width:80px;height:57px;background:rgba(0,0,0,0.025)"></div>
<div class="a" style="left:8px;top:79.5px;width:13px;height:13px;background:#fff;border:1px solid #e4e4e4;border-radius:3px"></div>
<div class="a" style="left:47px;top:71px;width:26px;height:29px;background:#f4f4f4;border:1px solid #e3e3e3;border-radius:4px"></div>
<svg style="left:50px;top:73px;" width="20" height="22" viewBox="0 0 20 22"><path d="M6 8 V5.5 Q6 1.8 9.5 1.8 Q13 1.8 13 5.5 V8" fill="none" stroke="#333" stroke-width="2"/><path d="M1 7.2 H18.5 V19 Q18.5 21.5 16 21.5 H3.5 Q1 21.5 1 19 Z" fill="#333"/><circle cx="6" cy="9.8" r="1" fill="#fff"/><circle cx="13" cy="9.8" r="1" fill="#fff"/></svg>
<div class="a" style="left:99px;top:71px;width:29px;height:29px;background:#f3f3f3;border:1px solid #e6e6e6;border-radius:4px"></div>
<div class="t" style="left:100px;top:80px;font-size:10px;font-weight:bold;letter-spacing:-0.6px;color:#1a1a1a">Fed<span style="color:#c4c4cc;letter-spacing:-0.4px;-webkit-text-stroke:0.35px #777">Ex</span></div>
<div class="a" style="left:129px;top:71px;width:28px;height:29px;background:#f7f7f7;border:1px solid #ececec;border-radius:4px"></div>
<svg style="left:134px;top:75px;" width="17" height="20" viewBox="0 0 17 20"><path d="M1 2.8 Q8.5 -0.6 16 2.8 V10.5 Q16 16.5 8.5 19 Q1 16.5 1 10.5 Z" fill="none" stroke="#a0a0a0" stroke-width="1.1"/><path d="M1.5 3 Q8.5 0.2 15.5 3 V5.2 Q8.5 3 1.5 5.2 Z" fill="#a0a0a0"/><text x="8.5" y="13.2" text-anchor="middle" font-family="Liberation Sans" font-size="9.5" fill="#8a8a8a" transform="scale(1,1.15) translate(0,-1.7)">ups</text></svg>
<div class="cl" style="left:189px;top:63.0px">007<br>Productions -<br>COPIED</div>
<div class="cl" style="left:279px;top:70.0px">Mr. James<br>Bond</div>
<div class="cl" style="left:475px;top:78.0px">1/25/2026</div>
<div class="cl" style="left:617px;top:78.0px">1/23/2026</div>
<div class="cl" style="left:707px;top:78.0px">1/23/2026</div>
<div class="cl" style="left:789px;top:78.0px">2724</div>
<div class="cl" style="left:870px;top:78.0px">False</div>
<div class="cl" style="left:936px;top:70.0px">10 Days<br>Prior</div>
<div class="cl" style="left:1011px;top:78.0px">$0.00</div>
<div class="cl" style="left:1124px;top:63.0px">RECEPTION -<br>COCKTAIL<br>BUFFET</div>
<div class="cl" style="left:1214px;top:78.0px">Chris Marsh</div>
<div class="cl" style="left:1326px;top:78.0px">Graduation</div>
<div class="cl" style="left:1416px;top:70.0px">_Client<br>Residence</div>
<div class="cl" style="left:1499px;top:78.0px">10001</div>
<div class="cl" style="left:1559px;top:78.0px">NY</div>
<div class="a" style="left:37px;top:57px;width:1px;height:57px;background:#e8e8e8"></div>
<div class="a" style="left:90px;top:57px;width:1px;height:57px;background:#e8e8e8"></div>
<div class="a" style="left:180px;top:57px;width:1px;height:57px;background:#e8e8e8"></div>
<div class="a" style="left:270px;top:57px;width:1px;height:57px;background:#e8e8e8"></div>
<div class="a" style="left:607px;top:57px;width:1px;height:57px;background:#e8e8e8"></div>
<div class="a" style="left:697px;top:57px;width:1px;height:57px;background:#e8e8e8"></div>
<div class="a" style="left:780px;top:57px;width:1px;height:57px;background:#e8e8e8"></div>
<div class="a" style="left:861px;top:57px;width:1px;height:57px;background:#e8e8e8"></div>
<div class="a" style="left:926px;top:57px;width:1px;height:57px;background:#e8e8e8"></div>
<div class="a" style="left:1001px;top:57px;width:1px;height:57px;background:#e8e8e8"></div>
<div class="a" style="left:1114px;top:57px;width:1px;height:57px;background:#e8e8e8"></div>
<div class="a" style="left:1204px;top:57px;width:1px;height:57px;background:#e8e8e8"></div>
<div class="a" style="left:1316px;top:57px;width:1px;height:57px;background:#e8e8e8"></div>
<div class="a" style="left:1406px;top:57px;width:1px;height:57px;background:#e8e8e8"></div>
<div class="a" style="left:1489px;top:57px;width:1px;height:57px;background:#e8e8e8"></div>
<div class="a" style="left:1549px;top:57px;width:1px;height:57px;background:#e8e8e8"></div>
<div class="a" style="left:1672px;top:57px;width:1px;height:57px;background:#e8e8e8"></div>
<div class="a" style="left:0px;top:114px;width:1672px;height:57px;background:#fff"></div>
<div class="a" style="left:781px;top:114px;width:80px;height:57px;background:rgba(0,0,0,0.025)"></div>
<div class="a" style="left:8px;top:136.5px;width:13px;height:13px;background:#fff;border:1px solid #e4e4e4;border-radius:3px"></div>
<div class="a" style="left:47px;top:128px;width:26px;height:29px;background:#f4f4f4;border:1px solid #e3e3e3;border-radius:4px"></div>
<svg style="left:50px;top:130px;" width="20" height="22" viewBox="0 0 20 22"><path d="M6 8 V5.5 Q6 1.8 9.5 1.8 Q13 1.8 13 5.5 V8" fill="none" stroke="#333" stroke-width="2"/><path d="M1 7.2 H18.5 V19 Q18.5 21.5 16 21.5 H3.5 Q1 21.5 1 19 Z" fill="#333"/><circle cx="6" cy="9.8" r="1" fill="#fff"/><circle cx="13" cy="9.8" r="1" fill="#fff"/></svg>
<div class="a" style="left:99px;top:128px;width:29px;height:29px;background:#f3f3f3;border:1px solid #e6e6e6;border-radius:4px"></div>
<div class="t" style="left:100px;top:137px;font-size:10px;font-weight:bold;letter-spacing:-0.6px;color:#1a1a1a">Fed<span style="color:#c4c4cc;letter-spacing:-0.4px;-webkit-text-stroke:0.35px #777">Ex</span></div>
<div class="a" style="left:129px;top:128px;width:28px;height:29px;background:#f7f7f7;border:1px solid #ececec;border-radius:4px"></div>
<svg style="left:134px;top:132px;" width="17" height="20" viewBox="0 0 17 20"><path d="M1 2.8 Q8.5 -0.6 16 2.8 V10.5 Q16 16.5 8.5 19 Q1 16.5 1 10.5 Z" fill="none" stroke="#a0a0a0" stroke-width="1.1"/><path d="M1.5 3 Q8.5 0.2 15.5 3 V5.2 Q8.5 3 1.5 5.2 Z" fill="#a0a0a0"/><text x="8.5" y="13.2" text-anchor="middle" font-family="Liberation Sans" font-size="9.5" fill="#8a8a8a" transform="scale(1,1.15) translate(0,-1.7)">ups</text></svg>
<div class="cl" style="left:189px;top:135.0px">Adriana</div>
<div class="cl" style="left:279px;top:135.0px">Samuel</div>
<div class="cl" style="left:475px;top:135.0px">1/10/2026</div>
<div class="cl" style="left:617px;top:135.0px">1/8/2026</div>
<div class="cl" style="left:707px;top:135.0px">1/8/2026</div>
<div class="cl" style="left:789px;top:135.0px">2722</div>
<div class="cl" style="left:870px;top:135.0px">False</div>
<div class="cl" style="left:936px;top:135.0px">C.O.D.</div>
<div class="cl" style="left:1011px;top:135.0px">$0.00</div>
<div class="cl" style="left:1124px;top:120.0px">RECEPTION -<br>COCKTAIL<br>BUFFET</div>
<div class="cl" style="left:1214px;top:135.0px">El Zapata</div>
<div class="cl" style="left:1326px;top:120.0px">Annual<br>Innovation<br>Summit 2026</div>
<div class="cl" style="left:1416px;top:127.0px">Graciela<br>2229</div>
<div class="cl" style="left:1499px;top:135.0px">26502</div>
<div class="cl" style="left:1559px;top:135.0px">WV</div>
<div class="a" style="left:37px;top:114px;width:1px;height:57px;background:#e8e8e8"></div>
<div class="a" style="left:90px;top:114px;width:1px;height:57px;background:#e8e8e8"></div>
<div class="a" style="left:180px;top:114px;width:1px;height:57px;background:#e8e8e8"></div>
<div class="a" style="left:270px;top:114px;width:1px;height:57px;background:#e8e8e8"></div>
<div class="a" style="left:607px;top:114px;width:1px;height:57px;background:#e8e8e8"></div>
<div class="a" style="left:697px;top:114px;width:1px;height:57px;background:#e8e8e8"></div>
<div class="a" style="left:780px;top:114px;width:1px;height:57px;background:#e8e8e8"></div>
<div class="a" style="left:861px;top:114px;width:1px;height:57px;background:#e8e8e8"></div>
<div class="a" style="left:926px;top:114px;width:1px;height:57px;background:#e8e8e8"></div>
<div class="a" style="left:1001px;top:114px;width:1px;height:57px;background:#e8e8e8"></div>
<div class="a" style="left:1114px;top:114px;width:1px;height:57px;background:#e8e8e8"></div>
<div class="a" style="left:1204px;top:114px;width:1px;height:57px;background:#e8e8e8"></div>
<div class="a" style="left:1316px;top:114px;width:1px;height:57px;background:#e8e8e8"></div>
<div class="a" style="left:1406px;top:114px;width:1px;height:57px;background:#e8e8e8"></div>
<div class="a" style="left:1489px;top:114px;width:1px;height:57px;background:#e8e8e8"></div>
<div class="a" style="left:1549px;top:114px;width:1px;height:57px;background:#e8e8e8"></div>
<div class="a" style="left:1672px;top:114px;width:1px;height:57px;background:#e8e8e8"></div>
<div class="a" style="left:0px;top:171px;width:1672px;height:57px;background:#f4f4f4"></div>
<div class="a" style="left:781px;top:171px;width:80px;height:57px;background:rgba(0,0,0,0.025)"></div>
<div class="a" style="left:8px;top:193.5px;width:13px;height:13px;background:#fff;border:1px solid #e4e4e4;border-radius:3px"></div>
<div class="a" style="left:47px;top:185px;width:26px;height:29px;background:#f4f4f4;border:1px solid #e3e3e3;border-radius:4px"></div>
<svg style="left:50px;top:187px;" width="20" height="22" viewBox="0 0 20 22"><path d="M6 8 V5.5 Q6 1.8 9.5 1.8 Q13 1.8 13 5.5 V8" fill="none" stroke="#333" stroke-width="2"/><path d="M1 7.2 H18.5 V19 Q18.5 21.5 16 21.5 H3.5 Q1 21.5 1 19 Z" fill="#333"/><circle cx="6" cy="9.8" r="1" fill="#fff"/><circle cx="13" cy="9.8" r="1" fill="#fff"/></svg>
<div class="a" style="left:99px;top:185px;width:29px;height:29px;background:#f3f3f3;border:1px solid #e6e6e6;border-radius:4px"></div>
<div class="t" style="left:100px;top:194px;font-size:10px;font-weight:bold;letter-spacing:-0.6px;color:#1a1a1a">Fed<span style="color:#c4c4cc;letter-spacing:-0.4px;-webkit-text-stroke:0.35px #777">Ex</span></div>
<div class="a" style="left:129px;top:185px;width:28px;height:29px;background:#f7f7f7;border:1px solid #ececec;border-radius:4px"></div>
<svg style="left:134px;top:189px;" width="17" height="20" viewBox="0 0 17 20"><path d="M1 2.8 Q8.5 -0.6 16 2.8 V10.5 Q16 16.5 8.5 19 Q1 16.5 1 10.5 Z" fill="none" stroke="#a0a0a0" stroke-width="1.1"/><path d="M1.5 3 Q8.5 0.2 15.5 3 V5.2 Q8.5 3 1.5 5.2 Z" fill="#a0a0a0"/><text x="8.5" y="13.2" text-anchor="middle" font-family="Liberation Sans" font-size="9.5" fill="#8a8a8a" transform="scale(1,1.15) translate(0,-1.7)">ups</text></svg>
<div class="cl" style="left:189px;top:192.0px">Ricardo</div>
<div class="cl" style="left:279px;top:192.0px">TEST</div>
<div class="cl" style="left:475px;top:192.0px">1/25/2026</div>
<div class="cl" style="left:617px;top:192.0px">1/23/2026</div>
<div class="cl" style="left:707px;top:192.0px">1/23/2026</div>
<div class="cl" style="left:789px;top:192.0px">2721</div>
<div class="cl" style="left:870px;top:192.0px">False</div>
<div class="cl" style="left:936px;top:192.0px">C.O.D.</div>
<div class="cl" style="left:1011px;top:192.0px">$2,179.82</div>
<div class="cl" style="left:1124px;top:177.0px">RECEPTION -<br>COCKTAIL<br>BUFFET</div>
<div class="cl" style="left:1214px;top:192.0px">Cesar peralta</div>
<div class="cl" style="left:1326px;top:192.0px">Test 1</div>
<div class="cl" style="left:1416px;top:184.0px">0473a7f6f6<br>2277</div>
<div class="cl" style="left:1499px;top:192.0px">92701</div>
<div class="cl" style="left:1559px;top:192.0px">CA</div>
<div class="a" style="left:37px;top:171px;width:1px;height:57px;background:#e8e8e8"></div>
<div class="a" style="left:90px;top:171px;width:1px;height:57px;background:#e8e8e8"></div>
<div class="a" style="left:180px;top:171px;width:1px;height:57px;background:#e8e8e8"></div>
<div class="a" style="left:270px;top:171px;width:1px;height:57px;background:#e8e8e8"></div>
<div class="a" style="left:607px;top:171px;width:1px;height:57px;background:#e8e8e8"></div>
<div class="a" style="left:697px;top:171px;width:1px;height:57px;background:#e8e8e8"></div>
<div class="a" style="left:780px;top:171px;width:1px;height:57px;background:#e8e8e8"></div>
<div class="a" style="left:861px;top:171px;width:1px;height:57px;background:#e8e8e8"></div>
<div class="a" style="left:926px;top:171px;width:1px;height:57px;background:#e8e8e8"></div>
<div class="a" style="left:1001px;top:171px;width:1px;height:57px;background:#e8e8e8"></div>
<div class="a" style="left:1114px;top:171px;width:1px;height:57px;background:#e8e8e8"></div>
<div class="a" style="left:1204px;top:171px;width:1px;height:57px;background:#e8e8e8"></div>
<div class="a" style="left:1316px;top:171px;width:1px;height:57px;background:#e8e8e8"></div>
<div class="a" style="left:1406px;top:171px;width:1px;height:57px;background:#e8e8e8"></div>
<div class="a" style="left:1489px;top:171px;width:1px;height:57px;background:#e8e8e8"></div>
<div class="a" style="left:1549px;top:171px;width:1px;height:57px;background:#e8e8e8"></div>
<div class="a" style="left:1672px;top:171px;width:1px;height:57px;background:#e8e8e8"></div>
<div class="a" style="left:0px;top:228px;width:1672px;height:57px;background:#fff"></div>
<div class="a" style="left:781px;top:228px;width:80px;height:57px;background:rgba(0,0,0,0.025)"></div>
<div class="a" style="left:8px;top:250.5px;width:13px;height:13px;background:#fff;border:1px solid #e4e4e4;border-radius:3px"></div>
<div class="a" style="left:47px;top:242px;width:26px;height:29px;background:#f4f4f4;border:1px solid #e3e3e3;border-radius:4px"></div>
<svg style="left:50px;top:244px;" width="20" height="22" viewBox="0 0 20 22"><path d="M6 8 V5.5 Q6 1.8 9.5 1.8 Q13 1.8 13 5.5 V8" fill="none" stroke="#333" stroke-width="2"/><path d="M1 7.2 H18.5 V19 Q18.5 21.5 16 21.5 H3.5 Q1 21.5 1 19 Z" fill="#333"/><circle cx="6" cy="9.8" r="1" fill="#fff"/><circle cx="13" cy="9.8" r="1" fill="#fff"/></svg>
<div class="a" style="left:99px;top:242px;width:29px;height:29px;background:#f3f3f3;border:1px solid #e6e6e6;border-radius:4px"></div>
<div class="t" style="left:100px;top:251px;font-size:10px;font-weight:bold;letter-spacing:-0.6px;color:#1a1a1a">Fed<span style="color:#c4c4cc;letter-spacing:-0.4px;-webkit-text-stroke:0.35px #777">Ex</span></div>
<div class="a" style="left:129px;top:242px;width:28px;height:29px;background:#f7f7f7;border:1px solid #ececec;border-radius:4px"></div>
<svg style="left:134px;top:246px;" width="17" height="20" viewBox="0 0 17 20"><path d="M1 2.8 Q8.5 -0.6 16 2.8 V10.5 Q16 16.5 8.5 19 Q1 16.5 1 10.5 Z" fill="none" stroke="#a0a0a0" stroke-width="1.1"/><path d="M1.5 3 Q8.5 0.2 15.5 3 V5.2 Q8.5 3 1.5 5.2 Z" fill="#a0a0a0"/><text x="8.5" y="13.2" text-anchor="middle" font-family="Liberation Sans" font-size="9.5" fill="#8a8a8a" transform="scale(1,1.15) translate(0,-1.7)">ups</text></svg>
<div class="cl" style="left:189px;top:249.0px">Daniel</div>
<div class="cl" style="left:279px;top:249.0px">Kenia's</div>
<div class="cl" style="left:370px;top:249.0px">Flintstoner, Fred</div>
<div class="cl" style="left:475px;top:249.0px">1/23/2026</div>
<div class="cl" style="left:617px;top:249.0px">1/21/2026</div>
<div class="cl" style="left:707px;top:249.0px">1/21/2026</div>
<div class="cl" style="left:789px;top:249.0px">2720</div>
<div class="cl" style="left:870px;top:249.0px">False</div>
<div class="cl" style="left:936px;top:241.0px">1.5% 14<br>days net 15</div>
<div class="cl" style="left:1011px;top:249.0px">$9.88</div>
<div class="cl" style="left:1124px;top:234.0px">RECEPTION -<br>COCKTAIL<br>BUFFET</div>
<div class="cl" style="left:1214px;top:249.0px">Cesar Minas</div>
<div class="cl" style="left:1326px;top:249.0px">Dinner</div>
<div class="cl" style="left:1416px;top:241.0px">Grand Hyatt<br>Hotel</div>
<div class="cl" style="left:1499px;top:249.0px">98103</div>
<div class="cl" style="left:1559px;top:249.0px">WA</div>
<div class="a" style="left:37px;top:228px;width:1px;height:57px;background:#e8e8e8"></div>
<div class="a" style="left:90px;top:228px;width:1px;height:57px;background:#e8e8e8"></div>
<div class="a" style="left:180px;top:228px;width:1px;height:57px;background:#e8e8e8"></div>
<div class="a" style="left:270px;top:228px;width:1px;height:57px;background:#e8e8e8"></div>
<div class="a" style="left:607px;top:228px;width:1px;height:57px;background:#e8e8e8"></div>
<div class="a" style="left:697px;top:228px;width:1px;height:57px;background:#e8e8e8"></div>
<div class="a" style="left:780px;top:228px;width:1px;height:57px;background:#e8e8e8"></div>
<div class="a" style="left:861px;top:228px;width:1px;height:57px;background:#e8e8e8"></div>
<div class="a" style="left:926px;top:228px;width:1px;height:57px;background:#e8e8e8"></div>
<div class="a" style="left:1001px;top:228px;width:1px;height:57px;background:#e8e8e8"></div>
<div class="a" style="left:1114px;top:228px;width:1px;height:57px;background:#e8e8e8"></div>
<div class="a" style="left:1204px;top:228px;width:1px;height:57px;background:#e8e8e8"></div>
<div class="a" style="left:1316px;top:228px;width:1px;height:57px;background:#e8e8e8"></div>
<div class="a" style="left:1406px;top:228px;width:1px;height:57px;background:#e8e8e8"></div>
<div class="a" style="left:1489px;top:228px;width:1px;height:57px;background:#e8e8e8"></div>
<div class="a" style="left:1549px;top:228px;width:1px;height:57px;background:#e8e8e8"></div>
<div class="a" style="left:1672px;top:228px;width:1px;height:57px;background:#e8e8e8"></div>
<div class="a" style="left:0px;top:285px;width:1672px;height:57px;background:#f4f4f4"></div>
<div class="a" style="left:781px;top:285px;width:80px;height:57px;background:rgba(0,0,0,0.025)"></div>
<div class="a" style="left:8px;top:307.5px;width:13px;height:13px;background:#fff;border:1px solid #e4e4e4;border-radius:3px"></div>
<div class="a" style="left:47px;top:299px;width:26px;height:29px;background:#f4f4f4;border:1px solid #e3e3e3;border-radius:4px"></div>
<svg style="left:50px;top:301px;" width="20" height="22" viewBox="0 0 20 22"><path d="M6 8 V5.5 Q6 1.8 9.5 1.8 Q13 1.8 13 5.5 V8" fill="none" stroke="#333" stroke-width="2"/><path d="M1 7.2 H18.5 V19 Q18.5 21.5 16 21.5 H3.5 Q1 21.5 1 19 Z" fill="#333"/><circle cx="6" cy="9.8" r="1" fill="#fff"/><circle cx="13" cy="9.8" r="1" fill="#fff"/></svg>
<div class="a" style="left:99px;top:299px;width:29px;height:29px;background:#f3f3f3;border:1px solid #e6e6e6;border-radius:4px"></div>
<div class="t" style="left:100px;top:308px;font-size:10px;font-weight:bold;letter-spacing:-0.6px;color:#1a1a1a">Fed<span style="color:#c4c4cc;letter-spacing:-0.4px;-webkit-text-stroke:0.35px #777">Ex</span></div>
<div class="a" style="left:129px;top:299px;width:28px;height:29px;background:#f7f7f7;border:1px solid #ececec;border-radius:4px"></div>
<svg style="left:134px;top:303px;" width="17" height="20" viewBox="0 0 17 20"><path d="M1 2.8 Q8.5 -0.6 16 2.8 V10.5 Q16 16.5 8.5 19 Q1 16.5 1 10.5 Z" fill="none" stroke="#a0a0a0" stroke-width="1.1"/><path d="M1.5 3 Q8.5 0.2 15.5 3 V5.2 Q8.5 3 1.5 5.2 Z" fill="#a0a0a0"/><text x="8.5" y="13.2" text-anchor="middle" font-family="Liberation Sans" font-size="9.5" fill="#8a8a8a" transform="scale(1,1.15) translate(0,-1.7)">ups</text></svg>
<div class="cl" style="left:189px;top:306.0px">Daniel</div>
<div class="cl" style="left:279px;top:306.0px">Kenia's</div>
<div class="cl" style="left:370px;top:306.0px">Flintstoner, Fred</div>
<div class="cl" style="left:475px;top:306.0px">1/23/2026</div>
<div class="cl" style="left:617px;top:306.0px">1/21/2026</div>
<div class="cl" style="left:707px;top:306.0px">1/21/2026</div>
<div class="cl" style="left:789px;top:306.0px">2720</div>
<div class="cl" style="left:870px;top:306.0px">False</div>
<div class="cl" style="left:936px;top:298.0px">1.5% 14<br>days net 15</div>
<div class="cl" style="left:1011px;top:306.0px">$9.88</div>
<div class="cl" style="left:1124px;top:291.0px">RECEPTION -<br>COCKTAIL<br>BUFFET</div>
<div class="cl" style="left:1214px;top:306.0px">Cesar Minas</div>
<div class="cl" style="left:1326px;top:306.0px">Dinner</div>
<div class="cl" style="left:1416px;top:298.0px">Grand Hyatt<br>Hotel</div>
<div class="cl" style="left:1499px;top:306.0px">98103</div>
<div class="cl" style="left:1559px;top:306.0px">WA</div>
<div class="a" style="left:37px;top:285px;width:1px;height:57px;background:#e8e8e8"></div>
<div class="a" style="left:90px;top:285px;width:1px;height:57px;background:#e8e8e8"></div>
<div class="a" style="left:180px;top:285px;width:1px;height:57px;background:#e8e8e8"></div>
<div class="a" style="left:270px;top:285px;width:1px;height:57px;background:#e8e8e8"></div>
<div class="a" style="left:607px;top:285px;width:1px;height:57px;background:#e8e8e8"></div>
<div class="a" style="left:697px;top:285px;width:1px;height:57px;background:#e8e8e8"></div>
<div class="a" style="left:780px;top:285px;width:1px;height:57px;background:#e8e8e8"></div>
<div class="a" style="left:861px;top:285px;width:1px;height:57px;background:#e8e8e8"></div>
<div class="a" style="left:926px;top:285px;width:1px;height:57px;background:#e8e8e8"></div>
<div class="a" style="left:1001px;top:285px;width:1px;height:57px;background:#e8e8e8"></div>
<div class="a" style="left:1114px;top:285px;width:1px;height:57px;background:#e8e8e8"></div>
<div class="a" style="left:1204px;top:285px;width:1px;height:57px;background:#e8e8e8"></div>
<div class="a" style="left:1316px;top:285px;width:1px;height:57px;background:#e8e8e8"></div>
<div class="a" style="left:1406px;top:285px;width:1px;height:57px;background:#e8e8e8"></div>
<div class="a" style="left:1489px;top:285px;width:1px;height:57px;background:#e8e8e8"></div>
<div class="a" style="left:1549px;top:285px;width:1px;height:57px;background:#e8e8e8"></div>
<div class="a" style="left:1672px;top:285px;width:1px;height:57px;background:#e8e8e8"></div>
<div class="a" style="left:0px;top:342px;width:1672px;height:57px;background:#fff"></div>
<div class="a" style="left:781px;top:342px;width:80px;height:57px;background:rgba(0,0,0,0.025)"></div>
<div class="a" style="left:8px;top:364.5px;width:13px;height:13px;background:#fff;border:1px solid #e4e4e4;border-radius:3px"></div>
<div class="a" style="left:47px;top:356px;width:26px;height:29px;background:#f4f4f4;border:1px solid #e3e3e3;border-radius:4px"></div>
<svg style="left:50px;top:358px;" width="20" height="22" viewBox="0 0 20 22"><path d="M6 8 V5.5 Q6 1.8 9.5 1.8 Q13 1.8 13 5.5 V8" fill="none" stroke="#333" stroke-width="2"/><path d="M1 7.2 H18.5 V19 Q18.5 21.5 16 21.5 H3.5 Q1 21.5 1 19 Z" fill="#333"/><circle cx="6" cy="9.8" r="1" fill="#fff"/><circle cx="13" cy="9.8" r="1" fill="#fff"/></svg>
<div class="a" style="left:99px;top:356px;width:29px;height:29px;background:#f3f3f3;border:1px solid #e6e6e6;border-radius:4px"></div>
<div class="t" style="left:100px;top:365px;font-size:10px;font-weight:bold;letter-spacing:-0.6px;color:#1a1a1a">Fed<span style="color:#c4c4cc;letter-spacing:-0.4px;-webkit-text-stroke:0.35px #777">Ex</span></div>
<div class="a" style="left:129px;top:356px;width:28px;height:29px;background:#f7f7f7;border:1px solid #ececec;border-radius:4px"></div>
<svg style="left:134px;top:360px;" width="17" height="20" viewBox="0 0 17 20"><path d="M1 2.8 Q8.5 -0.6 16 2.8 V10.5 Q16 16.5 8.5 19 Q1 16.5 1 10.5 Z" fill="none" stroke="#a0a0a0" stroke-width="1.1"/><path d="M1.5 3 Q8.5 0.2 15.5 3 V5.2 Q8.5 3 1.5 5.2 Z" fill="#a0a0a0"/><text x="8.5" y="13.2" text-anchor="middle" font-family="Liberation Sans" font-size="9.5" fill="#8a8a8a" transform="scale(1,1.15) translate(0,-1.7)">ups</text></svg>
<div class="cl" style="left:189px;top:363.0px">Ana Cader</div>
<div class="cl" style="left:279px;top:363.0px">Ana Cader</div>
<div class="cl" style="left:475px;top:363.0px">1/23/2026</div>
<div class="cl" style="left:617px;top:363.0px">1/21/2026</div>
<div class="cl" style="left:707px;top:363.0px">1/21/2026</div>
<div class="cl" style="left:789px;top:363.0px">2714</div>
<div class="cl" style="left:870px;top:363.0px">False</div>
<div class="cl" style="left:936px;top:363.0px">C.O.D.</div>
<div class="cl" style="left:1011px;top:363.0px">$125.16</div>
<div class="cl" style="left:1124px;top:348.0px">RECEPTION -<br>COCKTAIL<br>BUFFET</div>
<div class="cl" style="left:1214px;top:363.0px">Chris Marsh</div>
<div class="cl" style="left:1326px;top:355.0px">Test Event for<br>Alber 10</div>
<div class="cl" style="left:1416px;top:355.0px">_Client<br>Residence</div>
<div class="cl" style="left:1499px;top:363.0px">32789</div>
<div class="cl" style="left:1559px;top:363.0px">FL</div>
<div class="a" style="left:37px;top:342px;width:1px;height:57px;background:#e8e8e8"></div>
<div class="a" style="left:90px;top:342px;width:1px;height:57px;background:#e8e8e8"></div>
<div class="a" style="left:180px;top:342px;width:1px;height:57px;background:#e8e8e8"></div>
<div class="a" style="left:270px;top:342px;width:1px;height:57px;background:#e8e8e8"></div>
<div class="a" style="left:607px;top:342px;width:1px;height:57px;background:#e8e8e8"></div>
<div class="a" style="left:697px;top:342px;width:1px;height:57px;background:#e8e8e8"></div>
<div class="a" style="left:780px;top:342px;width:1px;height:57px;background:#e8e8e8"></div>
<div class="a" style="left:861px;top:342px;width:1px;height:57px;background:#e8e8e8"></div>
<div class="a" style="left:926px;top:342px;width:1px;height:57px;background:#e8e8e8"></div>
<div class="a" style="left:1001px;top:342px;width:1px;height:57px;background:#e8e8e8"></div>
<div class="a" style="left:1114px;top:342px;width:1px;height:57px;background:#e8e8e8"></div>
<div class="a" style="left:1204px;top:342px;width:1px;height:57px;background:#e8e8e8"></div>
<div class="a" style="left:1316px;top:342px;width:1px;height:57px;background:#e8e8e8"></div>
<div class="a" style="left:1406px;top:342px;width:1px;height:57px;background:#e8e8e8"></div>
<div class="a" style="left:1489px;top:342px;width:1px;height:57px;background:#e8e8e8"></div>
<div class="a" style="left:1549px;top:342px;width:1px;height:57px;background:#e8e8e8"></div>
<div class="a" style="left:1672px;top:342px;width:1px;height:57px;background:#e8e8e8"></div>
<div class="a" style="left:0px;top:399px;width:1672px;height:57px;background:#f4f4f4"></div>
<div class="a" style="left:781px;top:399px;width:80px;height:57px;background:rgba(0,0,0,0.025)"></div>
<div class="a" style="left:8px;top:421.5px;width:13px;height:13px;background:#fff;border:1px solid #e4e4e4;border-radius:3px"></div>
<div class="a" style="left:47px;top:413px;width:26px;height:29px;background:#f4f4f4;border:1px solid #e3e3e3;border-radius:4px"></div>
<svg style="left:50px;top:415px;" width="20" height="22" viewBox="0 0 20 22"><path d="M6 8 V5.5 Q6 1.8 9.5 1.8 Q13 1.8 13 5.5 V8" fill="none" stroke="#333" stroke-width="2"/><path d="M1 7.2 H18.5 V19 Q18.5 21.5 16 21.5 H3.5 Q1 21.5 1 19 Z" fill="#333"/><circle cx="6" cy="9.8" r="1" fill="#fff"/><circle cx="13" cy="9.8" r="1" fill="#fff"/></svg>
<div class="a" style="left:99px;top:413px;width:29px;height:29px;background:#f3f3f3;border:1px solid #e6e6e6;border-radius:4px"></div>
<div class="t" style="left:100px;top:422px;font-size:10px;font-weight:bold;letter-spacing:-0.6px;color:#1a1a1a">Fed<span style="color:#c4c4cc;letter-spacing:-0.4px;-webkit-text-stroke:0.35px #777">Ex</span></div>
<div class="a" style="left:129px;top:413px;width:28px;height:29px;background:#f7f7f7;border:1px solid #ececec;border-radius:4px"></div>
<svg style="left:134px;top:417px;" width="17" height="20" viewBox="0 0 17 20"><path d="M1 2.8 Q8.5 -0.6 16 2.8 V10.5 Q16 16.5 8.5 19 Q1 16.5 1 10.5 Z" fill="none" stroke="#a0a0a0" stroke-width="1.1"/><path d="M1.5 3 Q8.5 0.2 15.5 3 V5.2 Q8.5 3 1.5 5.2 Z" fill="#a0a0a0"/><text x="8.5" y="13.2" text-anchor="middle" font-family="Liberation Sans" font-size="9.5" fill="#8a8a8a" transform="scale(1,1.15) translate(0,-1.7)">ups</text></svg>
<div class="cl" style="left:189px;top:420.0px">Ana Cader</div>
<div class="cl" style="left:279px;top:420.0px">Ana Cader</div>
<div class="cl" style="left:475px;top:420.0px">1/22/2026</div>
<div class="cl" style="left:617px;top:420.0px">1/20/2026</div>
<div class="cl" style="left:707px;top:420.0px">1/20/2026</div>
<div class="cl" style="left:789px;top:420.0px">2713</div>
<div class="cl" style="left:870px;top:420.0px">False</div>
<div class="cl" style="left:936px;top:420.0px">C.O.D.</div>
<div class="cl" style="left:1011px;top:420.0px">$142.87</div>
<div class="cl" style="left:1124px;top:405.0px">RECEPTION -<br>COCKTAIL<br>BUFFET</div>
<div class="cl" style="left:1214px;top:420.0px">Chris Marsh</div>
<div class="cl" style="left:1326px;top:412.0px">Test Event for<br>Alber 9</div>
<div class="cl" style="left:1416px;top:412.0px">_Client<br>Residence</div>
<div class="cl" style="left:1499px;top:420.0px">32789</div>
<div class="cl" style="left:1559px;top:420.0px">FL</div>
<div class="a" style="left:37px;top:399px;width:1px;height:57px;background:#e8e8e8"></div>
<div class="a" style="left:90px;top:399px;width:1px;height:57px;background:#e8e8e8"></div>
<div class="a" style="left:180px;top:399px;width:1px;height:57px;background:#e8e8e8"></div>
<div class="a" style="left:270px;top:399px;width:1px;height:57px;background:#e8e8e8"></div>
<div class="a" style="left:607px;top:399px;width:1px;height:57px;background:#e8e8e8"></div>
<div class="a" style="left:697px;top:399px;width:1px;height:57px;background:#e8e8e8"></div>
<div class="a" style="left:780px;top:399px;width:1px;height:57px;background:#e8e8e8"></div>
<div class="a" style="left:861px;top:399px;width:1px;height:57px;background:#e8e8e8"></div>
<div class="a" style="left:926px;top:399px;width:1px;height:57px;background:#e8e8e8"></div>
<div class="a" style="left:1001px;top:399px;width:1px;height:57px;background:#e8e8e8"></div>
<div class="a" style="left:1114px;top:399px;width:1px;height:57px;background:#e8e8e8"></div>
<div class="a" style="left:1204px;top:399px;width:1px;height:57px;background:#e8e8e8"></div>
<div class="a" style="left:1316px;top:399px;width:1px;height:57px;background:#e8e8e8"></div>
<div class="a" style="left:1406px;top:399px;width:1px;height:57px;background:#e8e8e8"></div>
<div class="a" style="left:1489px;top:399px;width:1px;height:57px;background:#e8e8e8"></div>
<div class="a" style="left:1549px;top:399px;width:1px;height:57px;background:#e8e8e8"></div>
<div class="a" style="left:1672px;top:399px;width:1px;height:57px;background:#e8e8e8"></div>
<div class="a" style="left:0px;top:456px;width:1672px;height:57px;background:#fff"></div>
<div class="a" style="left:781px;top:456px;width:80px;height:57px;background:rgba(0,0,0,0.025)"></div>
<div class="a" style="left:8px;top:478.5px;width:13px;height:13px;background:#fff;border:1px solid #e4e4e4;border-radius:3px"></div>
<div class="a" style="left:47px;top:470px;width:26px;height:29px;background:#f4f4f4;border:1px solid #e3e3e3;border-radius:4px"></div>
<svg style="left:50px;top:472px;" width="20" height="22" viewBox="0 0 20 22"><path d="M6 8 V5.5 Q6 1.8 9.5 1.8 Q13 1.8 13 5.5 V8" fill="none" stroke="#333" stroke-width="2"/><path d="M1 7.2 H18.5 V19 Q18.5 21.5 16 21.5 H3.5 Q1 21.5 1 19 Z" fill="#333"/><circle cx="6" cy="9.8" r="1" fill="#fff"/><circle cx="13" cy="9.8" r="1" fill="#fff"/></svg>
<div class="a" style="left:99px;top:470px;width:29px;height:29px;background:#f3f3f3;border:1px solid #e6e6e6;border-radius:4px"></div>
<div class="t" style="left:100px;top:479px;font-size:10px;font-weight:bold;letter-spacing:-0.6px;color:#1a1a1a">Fed<span style="color:#c4c4cc;letter-spacing:-0.4px;-webkit-text-stroke:0.35px #777">Ex</span></div>
<div class="a" style="left:129px;top:470px;width:28px;height:29px;background:#f7f7f7;border:1px solid #ececec;border-radius:4px"></div>
<svg style="left:134px;top:474px;" width="17" height="20" viewBox="0 0 17 20"><path d="M1 2.8 Q8.5 -0.6 16 2.8 V10.5 Q16 16.5 8.5 19 Q1 16.5 1 10.5 Z" fill="none" stroke="#a0a0a0" stroke-width="1.1"/><path d="M1.5 3 Q8.5 0.2 15.5 3 V5.2 Q8.5 3 1.5 5.2 Z" fill="#a0a0a0"/><text x="8.5" y="13.2" text-anchor="middle" font-family="Liberation Sans" font-size="9.5" fill="#8a8a8a" transform="scale(1,1.15) translate(0,-1.7)">ups</text></svg>
<div class="cl" style="left:189px;top:477.0px">Ana Cader</div>
<div class="cl" style="left:279px;top:477.0px">Ana Cader</div>
<div class="cl" style="left:475px;top:477.0px">1/21/2026</div>
<div class="cl" style="left:617px;top:477.0px">1/19/2026</div>
<div class="cl" style="left:707px;top:477.0px">1/19/2026</div>
<div class="cl" style="left:789px;top:477.0px">2712</div>
<div class="cl" style="left:870px;top:477.0px">False</div>
<div class="cl" style="left:936px;top:477.0px">C.O.D.</div>
<div class="cl" style="left:1011px;top:477.0px">$110.13</div>
<div class="cl" style="left:1124px;top:462.0px">RECEPTION -<br>COCKTAIL<br>BUFFET</div>
<div class="cl" style="left:1214px;top:477.0px">Chris Marsh</div>
<div class="cl" style="left:1326px;top:469.0px">Test Event for<br>Alber 8</div>
<div class="cl" style="left:1416px;top:469.0px">_Client<br>Residence</div>
<div class="cl" style="left:1499px;top:477.0px">32789</div>
<div class="cl" style="left:1559px;top:477.0px">FL</div>
<div class="a" style="left:37px;top:456px;width:1px;height:57px;background:#e8e8e8"></div>
<div class="a" style="left:90px;top:456px;width:1px;height:57px;background:#e8e8e8"></div>
<div class="a" style="left:180px;top:456px;width:1px;height:57px;background:#e8e8e8"></div>
<div class="a" style="left:270px;top:456px;width:1px;height:57px;background:#e8e8e8"></div>
<div class="a" style="left:607px;top:456px;width:1px;height:57px;background:#e8e8e8"></div>
<div class="a" style="left:697px;top:456px;width:1px;height:57px;background:#e8e8e8"></div>
<div class="a" style="left:780px;top:456px;width:1px;height:57px;background:#e8e8e8"></div>
<div class="a" style="left:861px;top:456px;width:1px;height:57px;background:#e8e8e8"></div>
<div class="a" style="left:926px;top:456px;width:1px;height:57px;background:#e8e8e8"></div>
<div class="a" style="left:1001px;top:456px;width:1px;height:57px;background:#e8e8e8"></div>
<div class="a" style="left:1114px;top:456px;width:1px;height:57px;background:#e8e8e8"></div>
<div class="a" style="left:1204px;top:456px;width:1px;height:57px;background:#e8e8e8"></div>
<div class="a" style="left:1316px;top:456px;width:1px;height:57px;background:#e8e8e8"></div>
<div class="a" style="left:1406px;top:456px;width:1px;height:57px;background:#e8e8e8"></div>
<div class="a" style="left:1489px;top:456px;width:1px;height:57px;background:#e8e8e8"></div>
<div class="a" style="left:1549px;top:456px;width:1px;height:57px;background:#e8e8e8"></div>
<div class="a" style="left:1672px;top:456px;width:1px;height:57px;background:#e8e8e8"></div>
<div class="a" style="left:0px;top:513px;width:1672px;height:57px;background:#f4f4f4"></div>
<div class="a" style="left:781px;top:513px;width:80px;height:57px;background:rgba(0,0,0,0.025)"></div>
<div class="a" style="left:8px;top:535.5px;width:13px;height:13px;background:#fff;border:1px solid #e4e4e4;border-radius:3px"></div>
<div class="a" style="left:47px;top:527px;width:26px;height:29px;background:#f4f4f4;border:1px solid #e3e3e3;border-radius:4px"></div>
<svg style="left:50px;top:529px;" width="20" height="22" viewBox="0 0 20 22"><path d="M6 8 V5.5 Q6 1.8 9.5 1.8 Q13 1.8 13 5.5 V8" fill="none" stroke="#333" stroke-width="2"/><path d="M1 7.2 H18.5 V19 Q18.5 21.5 16 21.5 H3.5 Q1 21.5 1 19 Z" fill="#333"/><circle cx="6" cy="9.8" r="1" fill="#fff"/><circle cx="13" cy="9.8" r="1" fill="#fff"/></svg>
<div class="a" style="left:99px;top:527px;width:29px;height:29px;background:#f3f3f3;border:1px solid #e6e6e6;border-radius:4px"></div>
<div class="t" style="left:100px;top:536px;font-size:10px;font-weight:bold;letter-spacing:-0.6px;color:#1a1a1a">Fed<span style="color:#c4c4cc;letter-spacing:-0.4px;-webkit-text-stroke:0.35px #777">Ex</span></div>
<div class="a" style="left:129px;top:527px;width:28px;height:29px;background:#f7f7f7;border:1px solid #ececec;border-radius:4px"></div>
<svg style="left:134px;top:531px;" width="17" height="20" viewBox="0 0 17 20"><path d="M1 2.8 Q8.5 -0.6 16 2.8 V10.5 Q16 16.5 8.5 19 Q1 16.5 1 10.5 Z" fill="none" stroke="#a0a0a0" stroke-width="1.1"/><path d="M1.5 3 Q8.5 0.2 15.5 3 V5.2 Q8.5 3 1.5 5.2 Z" fill="#a0a0a0"/><text x="8.5" y="13.2" text-anchor="middle" font-family="Liberation Sans" font-size="9.5" fill="#8a8a8a" transform="scale(1,1.15) translate(0,-1.7)">ups</text></svg>
<div class="cl" style="left:189px;top:534.0px">Ana Cader</div>
<div class="cl" style="left:279px;top:534.0px">Ana Cader</div>
<div class="cl" style="left:475px;top:534.0px">1/20/2026</div>
<div class="cl" style="left:617px;top:534.0px">1/18/2026</div>
<div class="cl" style="left:707px;top:534.0px">1/18/2026</div>
<div class="cl" style="left:789px;top:534.0px">2711</div>
<div class="cl" style="left:870px;top:534.0px">False</div>
<div class="cl" style="left:936px;top:534.0px">C.O.D.</div>
<div class="cl" style="left:1011px;top:534.0px">$125.16</div>
<div class="cl" style="left:1124px;top:519.0px">RECEPTION -<br>COCKTAIL<br>BUFFET</div>
<div class="cl" style="left:1214px;top:534.0px">Chris Marsh</div>
<div class="cl" style="left:1326px;top:526.0px">Test Event for<br>Alber 7</div>
<div class="cl" style="left:1416px;top:526.0px">_Client<br>Residence</div>
<div class="cl" style="left:1499px;top:534.0px">32789</div>
<div class="cl" style="left:1559px;top:534.0px">FL</div>
<div class="a" style="left:37px;top:513px;width:1px;height:57px;background:#e8e8e8"></div>
<div class="a" style="left:90px;top:513px;width:1px;height:57px;background:#e8e8e8"></div>
<div class="a" style="left:180px;top:513px;width:1px;height:57px;background:#e8e8e8"></div>
<div class="a" style="left:270px;top:513px;width:1px;height:57px;background:#e8e8e8"></div>
<div class="a" style="left:607px;top:513px;width:1px;height:57px;background:#e8e8e8"></div>
<div class="a" style="left:697px;top:513px;width:1px;height:57px;background:#e8e8e8"></div>
<div class="a" style="left:780px;top:513px;width:1px;height:57px;background:#e8e8e8"></div>
<div class="a" style="left:861px;top:513px;width:1px;height:57px;background:#e8e8e8"></div>
<div class="a" style="left:926px;top:513px;width:1px;height:57px;background:#e8e8e8"></div>
<div class="a" style="left:1001px;top:513px;width:1px;height:57px;background:#e8e8e8"></div>
<div class="a" style="left:1114px;top:513px;width:1px;height:57px;background:#e8e8e8"></div>
<div class="a" style="left:1204px;top:513px;width:1px;height:57px;background:#e8e8e8"></div>
<div class="a" style="left:1316px;top:513px;width:1px;height:57px;background:#e8e8e8"></div>
<div class="a" style="left:1406px;top:513px;width:1px;height:57px;background:#e8e8e8"></div>
<div class="a" style="left:1489px;top:513px;width:1px;height:57px;background:#e8e8e8"></div>
<div class="a" style="left:1549px;top:513px;width:1px;height:57px;background:#e8e8e8"></div>
<div class="a" style="left:1672px;top:513px;width:1px;height:57px;background:#e8e8e8"></div>
</div>
<div class="a" style="left:206px;top:821px;width:1672px;height:15px;background:#fafafa"></div>
<svg style="left:211px;top:824px;" width="8" height="9" viewBox="0 0 8 9"><path d="M7 0.5 V8.5 L1 4.5 Z" fill="#777"/></svg>
<div class="a" style="left:224px;top:824px;width:1438px;height:9px;background:#8a8a8a;border-radius:5px"></div>
<svg style="left:1864px;top:824px;" width="8" height="9" viewBox="0 0 8 9"><path d="M1 0.5 V8.5 L7 4.5 Z" fill="#777"/></svg>
<div class="a" style="left:1879px;top:273px;width:14px;height:548px;background:#fafafa"></div>
<svg style="left:1881px;top:278px;" width="9" height="8" viewBox="0 0 9 8"><path d="M0.5 7 H8.5 L4.5 1 Z" fill="#888"/></svg>
<div class="a" style="left:1881px;top:291px;width:9px;height:148px;background:#8a8a8a;border-radius:4.5px"></div>
<svg style="left:1881px;top:808px;" width="9" height="8" viewBox="0 0 9 8"><path d="M0.5 1 H8.5 L4.5 7 Z" fill="#888"/></svg>
<div class="a" style="left:205px;top:836px;width:1689px;height:1px;background:#e6e6e6"></div>
<svg style="left:219px;top:850px;" width="7" height="8" viewBox="0 0 7 8"><rect x="0.3" y="0.5" width="1.3" height="7" fill="#8a8a8a"/><path d="M6.5 0.5 V7.5 L2 4 Z" fill="#8a8a8a"/></svg>
<svg style="left:243px;top:850px;" width="5" height="8" viewBox="0 0 5 8"><path d="M5 0.5 V7.5 L0.5 4 Z" fill="#8a8a8a"/></svg>
<div class="a" style="left:257px;top:842px;width:22px;height:23px;background:#fde0e0"></div>
<div class="t" style="left:265px;top:847px;color:#f45050">1</div>
<svg style="left:288px;top:850px;" width="5" height="8" viewBox="0 0 5 8"><path d="M0.5 0.5 V7.5 L5 4 Z" fill="#8a8a8a"/></svg>
<svg style="left:310px;top:850px;" width="7" height="8" viewBox="0 0 7 8"><path d="M0.5 0.5 V7.5 L5 4 Z" fill="#8a8a8a"/><rect x="5.4" y="0.5" width="1.3" height="7" fill="#8a8a8a"/></svg>
<div class="t" style="right:32px;top:848px;color:#333">1 - 34 of 34 items</div>
<div class="a" style="left:565px;top:241px;width:108px;height:591px;border:3px solid #1111ee"></div>
<div class="a" style="left:1552px;top:864px;width:209px;height:48px;background:#f9f9f9;border:1px solid #e6e6e6;border-radius:9px"></div>
<div class="a" style="left:1557px;top:869px;width:38px;height:38px;background:#fcfcfc;border:1px solid #ececec;border-radius:5px"></div>
<svg style="left:1568px;top:880px;" width="16" height="16" viewBox="0 0 16 16"><circle cx="8" cy="8" r="8" fill="#8b1aa8"/><path d="M4 12 Q3 7 7 4 Q7 7 9 7 Q10 5 10 3 Q13 6 12 10 Q11 12.5 8 12.5 Z" fill="#ff8a1a"/><path d="M6 12 Q6 9 8.5 8 Q9.5 10 11 10 Q10.5 12.5 8 12.5 Z" fill="#ffd21a"/></svg>
<svg style="left:1608px;top:880px;" width="18" height="17" viewBox="0 0 18 17"><defs><linearGradient id="cpa" x1="0" y1="0" x2="0" y2="1"><stop offset="0" stop-color="#1e90ff"/><stop offset="0.5" stop-color="#22c07a"/><stop offset="1" stop-color="#f5c400"/></linearGradient><linearGradient id="cpb" x1="0" y1="0" x2="1" y2="1"><stop offset="0" stop-color="#3a6ff0"/><stop offset="0.5" stop-color="#e05ad0"/><stop offset="1" stop-color="#ff7a9a"/></linearGradient></defs><path d="M4.5 1.5 H8.5 Q10 1.5 9.5 3 L6 12.5 Q5.5 14 4 14 H2.5 Q0.5 14 1 12 L3.5 3 Q4 1.5 4.5 1.5 Z" fill="url(#cpa)"/><path d="M9 1 H11 Q12.5 1 13 2.5 L15.5 11 Q16 13 14 13 H10 Q8.5 13 9 11.5 L11.5 4 Z" fill="url(#cpb)"/><rect x="6.2" y="10.2" width="10.8" height="5" rx="0.8" fill="#111"/><text x="11.6" y="14.3" text-anchor="middle" font-family="Liberation Sans" font-weight="bold" font-size="4.5" fill="#ddd">PCBD</text></svg>
<svg style="left:1647px;top:879px;" width="18" height="18" viewBox="0 0 18 18"><circle cx="6" cy="3" r="2" fill="#6264d0"/><circle cx="12" cy="4.5" r="1.6" fill="#7b7fe0"/><rect x="1" y="6" width="9" height="10" rx="1.5" fill="#5458c8"/><text x="5.5" y="14" text-anchor="middle" font-size="8" font-weight="bold" font-family="Liberation Sans" fill="#fff">T</text><circle cx="12.5" cy="12.5" r="4.5" fill="#22a84a"/><path d="M10.5 12.5 L12 14 L14.8 11" fill="none" stroke="#fff" stroke-width="1.3"/></svg>
<svg style="left:1688px;top:880px;" width="16" height="16" viewBox="0 0 16 16"><rect x="0.5" y="0.5" width="15" height="15" fill="#f2f2f2" stroke="#aaa"/><line x1="3" y1="4.5" x2="13" y2="4.5" stroke="#444"/><line x1="3" y1="8" x2="13" y2="8" stroke="#444"/><line x1="3" y1="11.5" x2="13" y2="11.5" stroke="#444"/><circle cx="10" cy="4.5" r="1.3" fill="#fff" stroke="#444" stroke-width="0.8"/><circle cx="5" cy="8" r="1.3" fill="#fff" stroke="#444" stroke-width="0.8"/><circle cx="9" cy="11.5" r="1.3" fill="#fff" stroke="#444" stroke-width="0.8"/></svg>
<svg style="left:1728px;top:880px;" width="17" height="17" viewBox="0 0 17 17"><path d="M7 0.5 L13 2.5 V8 Q13 13 7 15.5 Q1 13 1 8 V2.5 Z" fill="#1e7fd8"/><path d="M7 0.5 L13 2.5 V8 Q13 13 7 15.5 Z" fill="#4aa8f0"/><path d="M11.5 8 L16.5 16.5 H6.5 Z" fill="#ffc81a" stroke="#222" stroke-width="0.5"/><rect x="11.1" y="10.5" width="0.9" height="3.3" fill="#111"/><rect x="11.1" y="14.4" width="0.9" height="0.9" fill="#111"/></svg>
<div class="a" style="left:0px;top:0px;width:3px;height:924px;background:#45578a;z-index:50"></div>
<div class="a" style="left:1915px;top:0px;width:4px;height:924px;background:#45578a;z-index:50"></div>
<div class="a" style="left:0px;top:921px;width:1919px;height:3px;background:#45578a;z-index:50"></div>
<div class="a" style="left:3px;top:0px;width:4px;height:4px;z-index:50;background:radial-gradient(circle at 100% 100%, transparent 3.3px, #45578a 4px)"></div>
<div class="a" style="left:1911px;top:0px;width:4px;height:4px;z-index:50;background:radial-gradient(circle at 0% 100%, transparent 3.3px, #45578a 4px)"></div>
<div class="a" style="left:3px;top:913px;width:8px;height:8px;z-index:50;background:radial-gradient(circle at 100% 0%, transparent 7.3px, #45578a 8px)"></div>
<div class="a" style="left:1907px;top:913px;width:8px;height:8px;z-index:50;background:radial-gradient(circle at 0% 0%, transparent 7.3px, #45578a 8px)"></div></body></html>
